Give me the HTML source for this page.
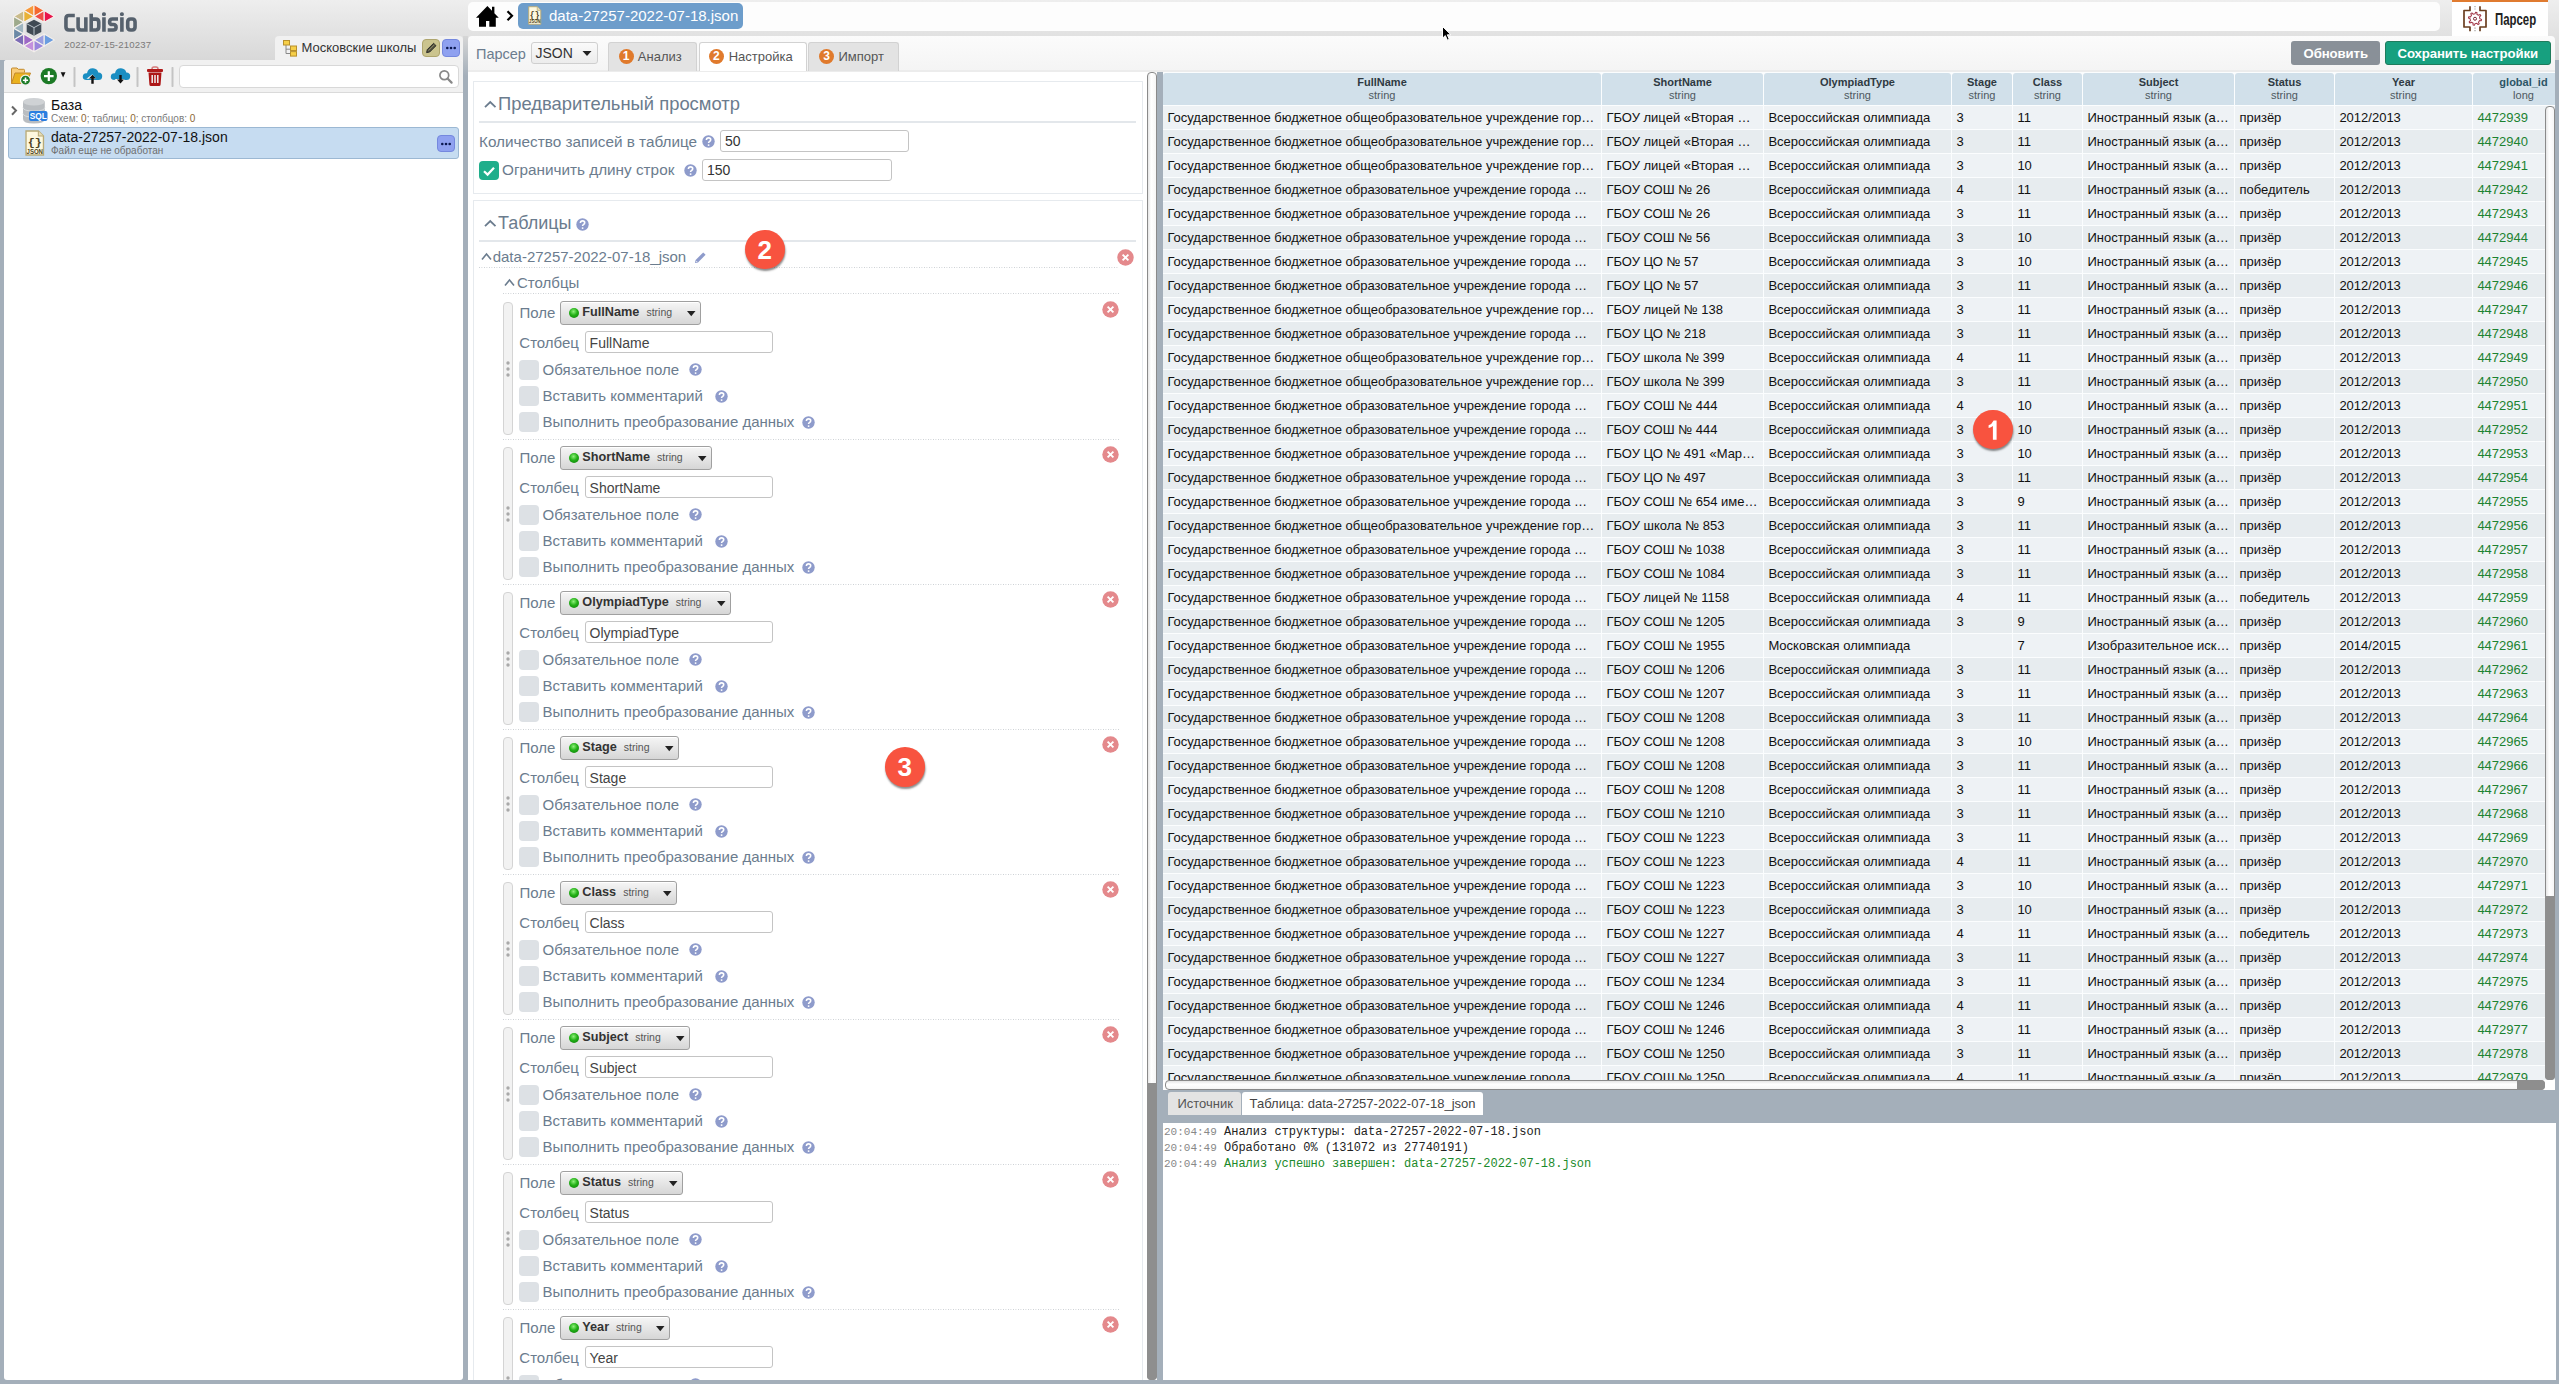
<!DOCTYPE html><html><head><meta charset="utf-8"><title>Cubisio</title><style>
*{box-sizing:border-box;margin:0;padding:0}
html,body{width:2559px;height:1384px;overflow:hidden}
body{position:relative;background:#a4afba;font-family:"Liberation Sans",sans-serif;color:#222}
.a{position:absolute}
.t{line-height:1;white-space:nowrap}
svg{position:absolute;overflow:visible}
.topband{left:0;top:0;width:2559px;height:60px;background:linear-gradient(#eeeeee,#d8d8d8)}
.crumb{left:468px;top:1.5px;width:1972px;height:29px;background:#fdfdfd;border-radius:5px}
.pill{left:518px;top:3px;width:225px;height:26px;background:#6d9dcb;border-radius:5px}
.partab{left:2452px;top:0;width:96px;height:37px;background:#fff;border-top:2px solid #e07b30}
.tb{left:468px;top:36px;width:2087px;height:36px;background:linear-gradient(#fbfbfb,#f4f4f4);border-radius:4px 4px 0 0;box-shadow:inset 0 -2px 0 #ececec,inset 0 -1.6px 0 #c4c4c4}
.slate{color:#6b7c8e}
.sel{border:1px solid #cfcfcf;border-radius:3px;background:linear-gradient(#fafafa,#ececec)}
.tab{top:42px;height:29px;background:#e3e3e3;border:1px solid #d2d2d2;border-bottom:none;border-radius:3px 3px 0 0}
.tab.act{background:#fff}
.num{width:15px;height:15px;border-radius:50%;background:#e07a2c;color:#fff;font-size:12px;font-weight:bold;line-height:15px;text-align:center}
.btn{top:41px;height:24px;border-radius:3px}
.lp{left:4px;top:60px;width:459px;height:1320px;background:#fff;border-radius:3px}
.ltb{left:4px;top:60px;width:459px;height:33px;background:#f1f1f1;border-bottom:1px solid #dadada;border-radius:3px 3px 0 0}
.mid{left:468px;top:72px;width:689px;height:1308px;background:#fff}
.vsb{width:10px;border:1px solid #8a8a8a;border-radius:4px;background:linear-gradient(90deg,#e6e6e6,#fff 40%,#f6f6f6)}
.thumb{background:#8e8e8e;border-radius:0 0 4px 4px}
.right{left:1163px;top:72px;width:1392px;height:1008px;background:#fbfdfe;overflow:hidden}
.hdr{top:1px;height:32px;background:#d1e0ea;border-radius:3px 3px 0 0;text-align:center;font-size:11px;line-height:13px;padding-top:3px;color:#4e5860}
.hdr b{display:block;color:#2f3a42}
.row{left:0;width:1392px;height:24px}
.c{position:absolute;top:0;height:23px;line-height:23px;font-size:13px;color:#111;white-space:nowrap;overflow:hidden;padding-left:4.4px}
.logbar{left:1163px;top:1090px;width:1393px;height:33px;background:#a4afba}
.log{left:1163px;top:1123px;width:1393px;height:257px;background:#fff;font-family:"Liberation Mono",monospace;font-size:12px;color:#222}
.ln{position:absolute;left:1px;height:16px;line-height:16px;white-space:pre}
.ln i{font-style:normal;font-size:11px;color:#888}
.sec{border:1px solid #e6eaee;background:#fff}
.inp{border:1px solid #c4c4c4;border-radius:3px;background:#fff}
.cb{width:20px;height:20px;border-radius:4px;background:#dde1e5}
.dot{height:1px;background-image:linear-gradient(90deg,#c9cdd1 50%,transparent 50%);background-size:2.5px 1px}
.fsel{height:24px;border:1px solid #a0a0a0;border-radius:3px;background:linear-gradient(#f6f6f6,#d6d6d6);box-shadow:inset 0 1px 0 #fff}
.gd{width:10px;height:10px;border-radius:50%;background:radial-gradient(circle at 45% 35%,#8ef07a,#22b016 45%,#0c7a0a 100%)}
.handle{width:10px;border:1px solid #d4d4d4;border-radius:4px;background:#f2f2f2}
.badge{width:39.5px;height:39.5px;border-radius:50%;background:#f8533f;color:#fff;font-size:26px;font-weight:bold;line-height:40px;text-align:center;box-shadow:0.5px 2px 2px rgba(0,0,0,.45)}
</style></head><body><div class="a topband"></div><div class="a" style="left:463px;top:36px;width:5px;height:40px;background:linear-gradient(#d6d6d6,#a4afba)"></div><svg class="a" style="left:0;top:0" width="60" height="60"><polygon points="23.78,10.50 23.78,22.30 13.56,16.40" fill="#c9bb8b" stroke="#f4f0ec" stroke-width="1.1" stroke-linejoin="round"/><polygon points="13.56,16.40 13.56,28.20 23.78,22.30" fill="#9eaa8c" stroke="#f4f0ec" stroke-width="1.1" stroke-linejoin="round"/><polygon points="23.78,22.30 23.78,34.10 13.56,28.20" fill="#9fb5c0" stroke="#f4f0ec" stroke-width="1.1" stroke-linejoin="round"/><polygon points="13.56,28.20 13.56,40.00 23.78,34.10" fill="#6b89a6" stroke="#f4f0ec" stroke-width="1.1" stroke-linejoin="round"/><polygon points="23.78,34.10 23.78,45.90 13.56,40.00" fill="#7c6cb6" stroke="#f4f0ec" stroke-width="1.1" stroke-linejoin="round"/><polygon points="34.00,4.60 34.00,16.40 23.78,10.50" fill="#f7993a" stroke="#f4f0ec" stroke-width="1.1" stroke-linejoin="round"/><polygon points="23.78,10.50 23.78,22.30 34.00,16.40" fill="#e8b236" stroke="#f4f0ec" stroke-width="1.1" stroke-linejoin="round"/><polygon points="23.78,34.10 23.78,45.90 34.00,40.00" fill="#9d68c6" stroke="#f4f0ec" stroke-width="1.1" stroke-linejoin="round"/><polygon points="34.00,40.00 34.00,51.80 23.78,45.90" fill="#c390dd" stroke="#f4f0ec" stroke-width="1.1" stroke-linejoin="round"/><polygon points="34.00,4.60 34.00,16.40 44.22,10.50" fill="#f5692e" stroke="#f4f0ec" stroke-width="1.1" stroke-linejoin="round"/><polygon points="44.22,10.50 44.22,22.30 34.00,16.40" fill="#ef4c45" stroke="#f4f0ec" stroke-width="1.1" stroke-linejoin="round"/><polygon points="44.22,34.10 44.22,45.90 34.00,40.00" fill="#9a9ee0" stroke="#f4f0ec" stroke-width="1.1" stroke-linejoin="round"/><polygon points="34.00,40.00 34.00,51.80 44.22,45.90" fill="#9b86dc" stroke="#f4f0ec" stroke-width="1.1" stroke-linejoin="round"/><polygon points="44.22,10.50 44.22,22.30 54.44,16.40" fill="#e9144b" stroke="#f4f0ec" stroke-width="1.1" stroke-linejoin="round"/><polygon points="44.22,34.10 44.22,45.90 54.44,40.00" fill="#6a9de0" stroke="#f4f0ec" stroke-width="1.1" stroke-linejoin="round"/><polygon points="34,19.8 41.3,23.6 41.3,32 34,35.8 26.7,32 26.7,23.6" fill="#3f4a54"/><path d="M26.9,23.8 L34,27.6 L41.1,23.8 M34,27.6 L34,35.6" stroke="#b9c2ca" stroke-width="1" fill="none"/></svg><svg style="left:0;top:0" width="150" height="40"><g fill="none" stroke="#56616d" stroke-width="3.6"><path d="M74.8,15.5 H68.9 Q65.95,15.5 65.95,18.4 V27.1 Q65.95,30 68.9,30 H74.8"/><path d="M78.1,17.2 V27.1 Q78.1,30 81,30 H85.85 M85.85,17.2 V31.75"/><path d="M91.2,13.8 V31.75 M91.2,19.1 H95.85 Q98.75,19.1 98.75,22 V27.1 Q98.75,30 95.85,30 H91.2"/><path d="M103.95,17.2 V31.75 M121.9,17.2 V31.75"/><path d="M118,19 H112.5 Q109.6,19 109.6,21.9 Q109.6,24.55 112.5,24.55 H113.2 Q116.1,24.55 116.1,27.3 Q116.1,30 113.2,30 H107.7"/><path d="M130.6,19.05 H132.15 Q135.05,19.05 135.05,21.95 V27.1 Q135.05,30 132.15,30 H130.6 Q127.7,30 127.7,27.1 V21.95 Q127.7,19.05 130.6,19.05 Z"/></g><rect x="102" y="12.2" width="3.9" height="3.8" rx="1.6" fill="#56616d"/><rect x="119.95" y="12.2" width="3.9" height="3.8" rx="1.6" fill="#56616d"/></svg><div class="a t " style="left:64.3px;top:39.87px;font-size:9.6px;color:#7a7a7a;letter-spacing:0.15px">2022-07-15-210237</div><div class="a" style="left:275px;top:36px;width:188px;height:26px;background:#f1f1f1;border-radius:4px 4px 0 0"></div><svg style="left:282px;top:39px" width="18" height="19"><path d="M4,5 V14.5 H9 M4,10.2 H9" stroke="#888" stroke-width="1" fill="none"/><rect x="1.5" y="1.5" width="6" height="4.5" fill="#f6cf48" stroke="#b8902c"/><rect x="8.5" y="7" width="6" height="4.5" fill="#f6cf48" stroke="#b8902c"/><rect x="8.5" y="12.6" width="6" height="4.5" fill="#f6cf48" stroke="#b8902c"/></svg><div class="a t " style="left:301.5px;top:41.00px;font-size:13px;color:#333">Московские школы</div><div class="a" style="left:422px;top:39px;width:17.5px;height:17.5px;background:#cbc48e;border:1px solid #aea56e;border-radius:4px"></div><svg style="left:424px;top:41px" width="14" height="14"><path d="M2.6,11.6 L3.3,8.6 L9.6,2.3 L12,4.7 L5.7,11 Z" fill="#55543f" stroke="#222" stroke-width="0.9"/><path d="M4.4,9.6 L10.4,3.6" stroke="#a8a17a" stroke-width="0.6"/></svg><div class="a" style="left:442px;top:39px;width:18px;height:17.5px;background:#8fa1f0;border:1px solid #7588de;border-radius:4px"></div><svg style="left:442px;top:39px" width="18" height="18"><circle cx="5.3" cy="9" r="1.3" fill="#0b1850"/><circle cx="9" cy="9" r="1.3" fill="#0b1850"/><circle cx="12.7" cy="9" r="1.3" fill="#0b1850"/></svg><div class="a lp"></div><div class="a ltb"></div><svg style="left:10px;top:66px" width="24" height="20"><path d="M1.5,17.5 V3 Q1.5,2 2.5,2 H7 L8.3,3.3 H13.5 Q14.5,3.3 14.5,4.3 V6.5" fill="#f9cd7a" stroke="#c38a2c" stroke-width="1"/><path d="M1.5,17.5 L5,7 H20.5 L16.5,17.5 Z" fill="#eab21e" stroke="#c38a2c" stroke-width="1" stroke-linejoin="round"/><circle cx="15.5" cy="14.2" r="5" fill="#1c7a26" stroke="#f1f1f1" stroke-width="1.2"/><path d="M15.5,11.6 V16.8 M12.9,14.2 H18.1" stroke="#fff" stroke-width="1.6"/></svg><svg style="left:39px;top:66px" width="30" height="20"><circle cx="9.8" cy="10.1" r="8.2" fill="#1c7a26"/><path d="M9.8,5.3 V14.9 M5,10.1 H14.6" stroke="#fff" stroke-width="2.2"/><path d="M21.7,6.3 H26.5 L24.1,11.4 Z" fill="#111"/></svg><div class="a" style="left:73.0px;top:67px;width:3px;height:20px;background:linear-gradient(90deg,#e6e6e6,#c4c4c4,#e6e6e6);border-radius:1px"></div><div class="a" style="left:136.0px;top:67px;width:3px;height:20px;background:linear-gradient(90deg,#e6e6e6,#c4c4c4,#e6e6e6);border-radius:1px"></div><div class="a" style="left:171.0px;top:67px;width:3px;height:20px;background:linear-gradient(90deg,#e6e6e6,#c4c4c4,#e6e6e6);border-radius:1px"></div><svg style="left:82px;top:67px" width="22" height="18"><path d="M4.5,13 Q0.5,13 0.8,9.2 Q1.2,5.8 5,6.2 Q6,1 11,1.2 Q15.5,1.5 16.3,5.5 Q20.5,5.8 20.2,9.5 Q20,13 16.5,13 Z" fill="#1a8ec2"/><path d="M10.3,7.2 L14.2,11.8 H4.4 Z" fill="#f1f1f1"/><path d="M10.5,7.8 L14,11.6 H11.7 V16.8 H9.3 V11.6 H7 Z" fill="#111"/></svg><svg style="left:110px;top:67px" width="22" height="18"><path d="M4.5,13 Q0.5,13 0.8,9.2 Q1.2,5.8 5,6.2 Q6,1 11,1.2 Q15.5,1.5 16.3,5.5 Q20.5,5.8 20.2,9.5 Q20,13 16.5,13 Z" fill="#1a8ec2"/><path d="M4.4,12.4 H14.6 L10.5,17.3 Z" fill="#f1f1f1" transform="translate(0,-0.4)"/><path d="M9.3,8 H11.7 V12.4 H14 L10.5,16.6 L7,12.4 H9.3 Z" fill="#111"/></svg><svg style="left:146px;top:66px" width="18" height="21"><path d="M6,3 Q6,1 8,1 H10 Q12,1 12,3" fill="none" stroke="#d77a7a" stroke-width="1.5"/><rect x="1" y="3" width="16" height="3" rx="1" fill="#b01a1a"/><path d="M2.5,6.5 H15.5 L14.6,18.5 Q14.5,20 13,20 H5 Q3.5,20 3.4,18.5 Z" fill="#ad1717"/><path d="M6.2,9 V17 M9,9 V17 M11.8,9 V17" stroke="#f1f1f1" stroke-width="1.5"/></svg><div class="a" style="left:178.5px;top:65px;width:280px;height:23px;background:#fff;border:1px solid #d8d8d8;border-radius:4px"></div><svg style="left:438px;top:69px" width="16" height="16"><circle cx="6.3" cy="6.3" r="4.4" fill="none" stroke="#888" stroke-width="1.7"/><path d="M9.5,9.5 L13.6,13.6" stroke="#888" stroke-width="2.2" stroke-linecap="round"/></svg><svg style="left:9px;top:104px" width="10" height="14"><path d="M3,2.5 L7,6.6 L3,10.7" fill="none" stroke="#666" stroke-width="2"/></svg><svg style="left:22px;top:97px" width="28" height="28"><path d="M1,4.5 V22 Q1,26.5 11.9,26.5 Q22.8,26.5 22.8,22 V4.5 Z" fill="#b9bdc1"/><path d="M1,10.5 Q1,14 11.9,14 Q22.8,14 22.8,10.5 M1,16.5 Q1,20 11.9,20 Q22.8,20 22.8,16.5" fill="none" stroke="#d7dadd" stroke-width="1"/><ellipse cx="11.9" cy="4.8" rx="10.9" ry="3.8" fill="#cfd2d5"/><rect x="7" y="14" width="18.5" height="10" rx="2" fill="#2a7ee0"/><text x="16.2" y="22.2" font-family="Liberation Sans" font-weight="bold" font-size="8.3" fill="#fff" text-anchor="middle">SQL</text></svg><div class="a t " style="left:51px;top:97.95px;font-size:14px;color:#111">База</div><div class="a t " style="left:51px;top:113.53px;font-size:10px;color:#7b7b7b">Схем: <span style="color:#8b6734">0</span>; таблиц: <span style="color:#8b6734">0</span>; столбцов: <span style="color:#8b6734">0</span></div><div class="a" style="left:8px;top:126.5px;width:451px;height:32.5px;background:#c6dcf1;border:1px solid #9cb8d3;border-radius:3px"></div><svg style="left:24.5px;top:130px" width="19.5" height="26" viewBox="0 0 19 26" preserveAspectRatio="none"><path d="M1,1 H13 L18,6 V25 H1 Z" fill="#fdf8df" stroke="#b9aa77" stroke-width="1.3"/><path d="M13,1 V6 H18" fill="#e6ddb8" stroke="#b9aa77" stroke-width="1"/><text x="9.5" y="16" font-family="Liberation Mono" font-weight="bold" font-size="11.5" fill="#4d4322" text-anchor="middle">{}</text><text x="9.5" y="23.6" font-family="Liberation Sans" font-weight="bold" font-size="6.8" fill="#4d4322" text-anchor="middle" textLength="16" lengthAdjust="spacingAndGlyphs">JSON</text></svg><div class="a t " style="left:51px;top:129.55px;font-size:14px;color:#111">data-27257-2022-07-18.json</div><div class="a t " style="left:51px;top:146.13px;font-size:10px;color:#6e6e6e">Файл еще не обработан</div><div class="a" style="left:437px;top:134.5px;width:18px;height:17.5px;background:#8fa1f0;border:1px solid #7588de;border-radius:4px"></div><svg style="left:437px;top:134.5px" width="18" height="18"><circle cx="5.3" cy="9" r="1.3" fill="#0b1850"/><circle cx="9" cy="9" r="1.3" fill="#0b1850"/><circle cx="12.7" cy="9" r="1.3" fill="#0b1850"/></svg><div class="a crumb"></div><svg style="left:475px;top:5px" width="26" height="23"><path d="M1,12.7 L12.4,1 L17,5.8 V1.8 H19.4 V8.3 L23.75,12.7 H20.8 V21.8 H14.3 V16 H11 V21.8 H4 V12.7 Z" fill="#000"/></svg><svg style="left:505px;top:9px" width="10" height="14"><path d="M2.5,2.3 L7,6.8 L2.5,11.3" fill="none" stroke="#000" stroke-width="2.2"/></svg><div class="a pill"></div><svg style="left:528px;top:6px" width="13.5" height="19" viewBox="0 0 19 26" preserveAspectRatio="none"><path d="M1,1 H13 L18,6 V25 H1 Z" fill="#fdf8df" stroke="#b9aa77" stroke-width="1.3"/><path d="M13,1 V6 H18" fill="#e6ddb8" stroke="#b9aa77" stroke-width="1"/><text x="9.5" y="16" font-family="Liberation Mono" font-weight="bold" font-size="11.5" fill="#4d4322" text-anchor="middle">{}</text><text x="9.5" y="23.6" font-family="Liberation Sans" font-weight="bold" font-size="6.8" fill="#4d4322" text-anchor="middle" textLength="16" lengthAdjust="spacingAndGlyphs">JSON</text></svg><div class="a t " style="left:549px;top:7.80px;font-size:15px;color:#fff">data-27257-2022-07-18.json</div><div class="a partab"></div><svg style="left:2460px;top:5px" width="30" height="28"><path d="M10,1.2 V5.5 H4 V22 H10 V26.3 M20,1.2 V5.5 H26 V22 H20 V26.3" fill="none" stroke="#6a3f20" stroke-width="1.7" stroke-linejoin="round"/><path d="M15,1 V4.5 M15,22.5 V26.5" stroke="#999" stroke-width="1.1" stroke-dasharray="1.3,1.2"/><path d="M19.90,13.75 L21.57,14.37 L21.31,15.69 L19.53,15.63 L18.46,17.21 L19.21,18.84 L18.09,19.58 L16.88,18.28 L15.00,18.65 L14.38,20.32 L13.06,20.06 L13.12,18.28 L11.54,17.21 L9.91,17.96 L9.17,16.84 L10.47,15.63 L10.10,13.75 L8.43,13.13 L8.69,11.81 L10.47,11.87 L11.54,10.29 L10.79,8.66 L11.91,7.92 L13.12,9.22 L15.00,8.85 L15.62,7.18 L16.94,7.44 L16.88,9.22 L18.46,10.29 L20.09,9.54 L20.83,10.66 L19.53,11.87 Z" fill="none" stroke="#a33a4a" stroke-width="1.05" stroke-linejoin="round"/><circle cx="15" cy="13.75" r="1.5" fill="none" stroke="#7a2a35" stroke-width="1"/></svg><div class="a t " style="left:2494.8px;top:11.98px;font-size:16.8px;color:#222;font-weight:bold;transform:scaleX(0.68);transform-origin:left top">Парсер</div><div class="a tb"></div><div class="a t slate" style="left:476px;top:46.73px;font-size:14.5px;">Парсер</div><div class="a sel" style="left:531px;top:42px;width:67px;height:22px"></div><div class="a t " style="left:535.5px;top:45.75px;font-size:14px;color:#333">JSON</div><svg style="left:582px;top:50px" width="10" height="8"><path d="M0.5,1 H9.5 L5,6 Z" fill="#222"/></svg><div class="a tab" style="left:608px;width:89px"></div><div class="a num" style="left:618.5px;top:49.2px">1</div><div class="a t " style="left:637.8px;top:50.00px;font-size:13px;color:#555">Анализ</div><div class="a tab act" style="left:699px;width:108px"></div><div class="a num" style="left:708.9px;top:49.2px">2</div><div class="a t " style="left:728.7px;top:50.00px;font-size:13px;color:#555">Настройка</div><div class="a tab" style="left:808px;width:91px"></div><div class="a num" style="left:819.2px;top:49.2px">3</div><div class="a t " style="left:838.5px;top:50.00px;font-size:13px;color:#555">Импорт</div><div class="a btn" style="left:2291px;width:89px;background:#899098"></div><div class="a t " style="left:2303.5px;top:46.83px;font-size:13.2px;color:#fff;font-weight:bold;letter-spacing:-0.1px">Обновить</div><div class="a btn" style="left:2385px;width:166px;background:#17a07f;border:1px solid #1f7c5c"></div><div class="a t " style="left:2397.5px;top:46.83px;font-size:13.2px;color:#fff;font-weight:bold;letter-spacing:-0.1px">Сохранить настройки</div><div class="a mid"></div><div class="a vsb" style="left:1147px;top:72px;height:1308px"></div><div class="a thumb" style="left:1147px;top:1083px;width:10px;height:297px"></div><div class="a sec" style="left:472.5px;top:81px;width:670px;height:113px"></div><svg style="left:483.6px;top:100px" width="12.5" height="9.1"><path d="M1,7.1 L6.25,2 L11.5,7.1" fill="none" stroke="#6b7c8e" stroke-width="1.8"/></svg><div class="a t slate" style="left:498px;top:94.62px;font-size:18.4px;">Предварительный просмотр</div><div class="a" style="left:479px;top:121px;width:657px;height:2px;background:#e3e7eb"></div><div class="a t slate" style="left:479px;top:133.55px;font-size:15.3px;">Количество записей в таблице</div><svg style="left:701.5px;top:134.5px" width="13" height="13"><circle cx="6.5" cy="6.5" r="6.2" fill="#8e9bcb"/><path d="M4.4,5.1 Q4.4,2.9 6.6,2.9 Q8.7,2.9 8.7,4.8 Q8.7,5.9 7.4,6.6 Q6.6,7 6.6,8.1" fill="none" stroke="#fff" stroke-width="1.6"/><circle cx="6.6" cy="10.1" r="0.95" fill="#fff"/></svg><div class="a inp" style="left:720px;top:129.7px;width:189px;height:22px"></div><div class="a t " style="left:725px;top:134.15px;font-size:14px;color:#333">50</div><div class="a" style="left:479px;top:160.7px;width:20px;height:19.5px;background:#1fae8b;border-radius:4px"></div><svg style="left:479px;top:160.7px" width="20" height="20"><path d="M5,10.2 L8.6,13.6 L15,6.8" fill="none" stroke="#fff" stroke-width="2.2"/></svg><div class="a t slate" style="left:502px;top:162.05px;font-size:15.3px;">Ограничить длину строк</div><svg style="left:683.5px;top:163.5px" width="13" height="13"><circle cx="6.5" cy="6.5" r="6.2" fill="#8e9bcb"/><path d="M4.4,5.1 Q4.4,2.9 6.6,2.9 Q8.7,2.9 8.7,4.8 Q8.7,5.9 7.4,6.6 Q6.6,7 6.6,8.1" fill="none" stroke="#fff" stroke-width="1.6"/><circle cx="6.6" cy="10.1" r="0.95" fill="#fff"/></svg><div class="a inp" style="left:702px;top:158.8px;width:190px;height:22px"></div><div class="a t " style="left:707px;top:163.15px;font-size:14px;color:#333">150</div><div class="a sec" style="left:472.5px;top:200px;width:670px;height:1190px"></div><svg style="left:483.6px;top:219.3px" width="12.5" height="9.1"><path d="M1,7.1 L6.25,2 L11.5,7.1" fill="none" stroke="#6b7c8e" stroke-width="1.8"/></svg><div class="a t slate" style="left:498px;top:214.16px;font-size:18px;">Таблицы</div><svg style="left:576.1px;top:217.5px" width="13" height="13"><circle cx="6.5" cy="6.5" r="6.2" fill="#8e9bcb"/><path d="M4.4,5.1 Q4.4,2.9 6.6,2.9 Q8.7,2.9 8.7,4.8 Q8.7,5.9 7.4,6.6 Q6.6,7 6.6,8.1" fill="none" stroke="#fff" stroke-width="1.6"/><circle cx="6.6" cy="10.1" r="0.95" fill="#fff"/></svg><div class="a" style="left:479px;top:240px;width:657px;height:2px;background:#e3e7eb"></div><svg style="left:480.5px;top:251.5px" width="11" height="9.5"><path d="M1,7.5 L5.5,2 L10,7.5" fill="none" stroke="#6b7c8e" stroke-width="1.6"/></svg><div class="a t slate" style="left:492.7px;top:248.70px;font-size:15px;">data-27257-2022-07-18_json</div><svg style="left:693px;top:250px" width="15" height="15"><path d="M2,13 L2.6,10 L10.2,2.4 L12.6,4.8 L5,12.4 Z" fill="#8e9bcb"/><path d="M3.2,12 L4.2,11" stroke="#fff" stroke-width="0.8"/></svg><svg style="left:1117.0px;top:249.39999999999998px" width="17" height="17"><circle cx="8.5" cy="8.5" r="8.2" fill="#e4898c"/><path d="M5.6,5.6 L11.4,11.4 M11.4,5.6 L5.6,11.4" stroke="#fff" stroke-width="1.9"/></svg><div class="a dot" style="left:479px;top:267px;width:640px"></div><svg style="left:504px;top:277.5px" width="11" height="9.5"><path d="M1,7.5 L5.5,2 L10,7.5" fill="none" stroke="#6b7c8e" stroke-width="1.6"/></svg><div class="a t slate" style="left:517px;top:275.00px;font-size:15px;">Столбцы</div><div class="a dot" style="left:503px;top:293px;width:616px"></div><div class="a handle" style="left:503px;top:302.4px;height:133px"></div><svg style="left:505px;top:360px" width="6" height="18"><circle cx="3" cy="3" r="1.7" fill="#a9a9a9"/><circle cx="3" cy="9" r="1.7" fill="#a9a9a9"/><circle cx="3" cy="15" r="1.7" fill="#a9a9a9"/></svg><div class="a t slate" style="left:519.4px;top:305.00px;font-size:15px;">Поле</div><div class="a fsel" style="left:560.4px;top:300.5px;width:141.10000000000002px"></div><div class="a gd" style="left:568.7px;top:307.9px"></div><div class="a t " style="left:582.3px;top:305.95px;font-size:12.7px;color:#333"><b>FullName</b><span style="font-size:10.5px;margin-left:7px;color:#555">string</span></div><svg style="left:687.2px;top:310.5px" width="9" height="6"><path d="M0,0 H8.5 L4.25,5.3 Z" fill="#222"/></svg><svg style="left:1101.5px;top:301.3px" width="17" height="17"><circle cx="8.5" cy="8.5" r="8.2" fill="#e4898c"/><path d="M5.6,5.6 L11.4,11.4 M11.4,5.6 L5.6,11.4" stroke="#fff" stroke-width="1.9"/></svg><div class="a t slate" style="left:519.3px;top:335.30px;font-size:15px;">Столбец</div><div class="a inp" style="left:584.5px;top:331.4px;width:188px;height:22px"></div><div class="a t " style="left:589.6px;top:335.65px;font-size:14px;color:#444">FullName</div><div class="a cb" style="left:519.3px;top:360.0px"></div><div class="a t slate" style="left:542.6px;top:361.90px;font-size:15px;">Обязательное поле</div><svg style="left:688.5px;top:363.0px" width="13" height="13"><circle cx="6.5" cy="6.5" r="6.2" fill="#8e9bcb"/><path d="M4.4,5.1 Q4.4,2.9 6.6,2.9 Q8.7,2.9 8.7,4.8 Q8.7,5.9 7.4,6.6 Q6.6,7 6.6,8.1" fill="none" stroke="#fff" stroke-width="1.6"/><circle cx="6.6" cy="10.1" r="0.95" fill="#fff"/></svg><div class="a cb" style="left:519.3px;top:386.2px"></div><div class="a t slate" style="left:542.6px;top:388.10px;font-size:15px;">Вставить комментарий</div><svg style="left:714.6px;top:389.5px" width="13" height="13"><circle cx="6.5" cy="6.5" r="6.2" fill="#8e9bcb"/><path d="M4.4,5.1 Q4.4,2.9 6.6,2.9 Q8.7,2.9 8.7,4.8 Q8.7,5.9 7.4,6.6 Q6.6,7 6.6,8.1" fill="none" stroke="#fff" stroke-width="1.6"/><circle cx="6.6" cy="10.1" r="0.95" fill="#fff"/></svg><div class="a cb" style="left:519.3px;top:412.4px"></div><div class="a t slate" style="left:542.6px;top:414.30px;font-size:15px;">Выполнить преобразование данных</div><svg style="left:801.7px;top:416.0px" width="13" height="13"><circle cx="6.5" cy="6.5" r="6.2" fill="#8e9bcb"/><path d="M4.4,5.1 Q4.4,2.9 6.6,2.9 Q8.7,2.9 8.7,4.8 Q8.7,5.9 7.4,6.6 Q6.6,7 6.6,8.1" fill="none" stroke="#fff" stroke-width="1.6"/><circle cx="6.6" cy="10.1" r="0.95" fill="#fff"/></svg><div class="a dot" style="left:503px;top:438.5px;width:616px"></div><div class="a handle" style="left:503px;top:447.4px;height:133px"></div><svg style="left:505px;top:505px" width="6" height="18"><circle cx="3" cy="3" r="1.7" fill="#a9a9a9"/><circle cx="3" cy="9" r="1.7" fill="#a9a9a9"/><circle cx="3" cy="15" r="1.7" fill="#a9a9a9"/></svg><div class="a t slate" style="left:519.4px;top:450.00px;font-size:15px;">Поле</div><div class="a fsel" style="left:560.4px;top:445.5px;width:151.60000000000002px"></div><div class="a gd" style="left:568.7px;top:452.9px"></div><div class="a t " style="left:582.3px;top:450.95px;font-size:12.7px;color:#333"><b>ShortName</b><span style="font-size:10.5px;margin-left:7px;color:#555">string</span></div><svg style="left:697.7px;top:455.5px" width="9" height="6"><path d="M0,0 H8.5 L4.25,5.3 Z" fill="#222"/></svg><svg style="left:1101.5px;top:446.3px" width="17" height="17"><circle cx="8.5" cy="8.5" r="8.2" fill="#e4898c"/><path d="M5.6,5.6 L11.4,11.4 M11.4,5.6 L5.6,11.4" stroke="#fff" stroke-width="1.9"/></svg><div class="a t slate" style="left:519.3px;top:480.30px;font-size:15px;">Столбец</div><div class="a inp" style="left:584.5px;top:476.4px;width:188px;height:22px"></div><div class="a t " style="left:589.6px;top:480.65px;font-size:14px;color:#444">ShortName</div><div class="a cb" style="left:519.3px;top:505.0px"></div><div class="a t slate" style="left:542.6px;top:506.90px;font-size:15px;">Обязательное поле</div><svg style="left:688.5px;top:508.0px" width="13" height="13"><circle cx="6.5" cy="6.5" r="6.2" fill="#8e9bcb"/><path d="M4.4,5.1 Q4.4,2.9 6.6,2.9 Q8.7,2.9 8.7,4.8 Q8.7,5.9 7.4,6.6 Q6.6,7 6.6,8.1" fill="none" stroke="#fff" stroke-width="1.6"/><circle cx="6.6" cy="10.1" r="0.95" fill="#fff"/></svg><div class="a cb" style="left:519.3px;top:531.2px"></div><div class="a t slate" style="left:542.6px;top:533.10px;font-size:15px;">Вставить комментарий</div><svg style="left:714.6px;top:534.5px" width="13" height="13"><circle cx="6.5" cy="6.5" r="6.2" fill="#8e9bcb"/><path d="M4.4,5.1 Q4.4,2.9 6.6,2.9 Q8.7,2.9 8.7,4.8 Q8.7,5.9 7.4,6.6 Q6.6,7 6.6,8.1" fill="none" stroke="#fff" stroke-width="1.6"/><circle cx="6.6" cy="10.1" r="0.95" fill="#fff"/></svg><div class="a cb" style="left:519.3px;top:557.4px"></div><div class="a t slate" style="left:542.6px;top:559.30px;font-size:15px;">Выполнить преобразование данных</div><svg style="left:801.7px;top:561.0px" width="13" height="13"><circle cx="6.5" cy="6.5" r="6.2" fill="#8e9bcb"/><path d="M4.4,5.1 Q4.4,2.9 6.6,2.9 Q8.7,2.9 8.7,4.8 Q8.7,5.9 7.4,6.6 Q6.6,7 6.6,8.1" fill="none" stroke="#fff" stroke-width="1.6"/><circle cx="6.6" cy="10.1" r="0.95" fill="#fff"/></svg><div class="a dot" style="left:503px;top:583.5px;width:616px"></div><div class="a handle" style="left:503px;top:592.4px;height:133px"></div><svg style="left:505px;top:650px" width="6" height="18"><circle cx="3" cy="3" r="1.7" fill="#a9a9a9"/><circle cx="3" cy="9" r="1.7" fill="#a9a9a9"/><circle cx="3" cy="15" r="1.7" fill="#a9a9a9"/></svg><div class="a t slate" style="left:519.4px;top:595.00px;font-size:15px;">Поле</div><div class="a fsel" style="left:560.4px;top:590.5px;width:170.60000000000002px"></div><div class="a gd" style="left:568.7px;top:597.9px"></div><div class="a t " style="left:582.3px;top:595.95px;font-size:12.7px;color:#333"><b>OlympiadType</b><span style="font-size:10.5px;margin-left:7px;color:#555">string</span></div><svg style="left:716.7px;top:600.5px" width="9" height="6"><path d="M0,0 H8.5 L4.25,5.3 Z" fill="#222"/></svg><svg style="left:1101.5px;top:591.3px" width="17" height="17"><circle cx="8.5" cy="8.5" r="8.2" fill="#e4898c"/><path d="M5.6,5.6 L11.4,11.4 M11.4,5.6 L5.6,11.4" stroke="#fff" stroke-width="1.9"/></svg><div class="a t slate" style="left:519.3px;top:625.30px;font-size:15px;">Столбец</div><div class="a inp" style="left:584.5px;top:621.4px;width:188px;height:22px"></div><div class="a t " style="left:589.6px;top:625.65px;font-size:14px;color:#444">OlympiadType</div><div class="a cb" style="left:519.3px;top:650.0px"></div><div class="a t slate" style="left:542.6px;top:651.90px;font-size:15px;">Обязательное поле</div><svg style="left:688.5px;top:653.0px" width="13" height="13"><circle cx="6.5" cy="6.5" r="6.2" fill="#8e9bcb"/><path d="M4.4,5.1 Q4.4,2.9 6.6,2.9 Q8.7,2.9 8.7,4.8 Q8.7,5.9 7.4,6.6 Q6.6,7 6.6,8.1" fill="none" stroke="#fff" stroke-width="1.6"/><circle cx="6.6" cy="10.1" r="0.95" fill="#fff"/></svg><div class="a cb" style="left:519.3px;top:676.2px"></div><div class="a t slate" style="left:542.6px;top:678.10px;font-size:15px;">Вставить комментарий</div><svg style="left:714.6px;top:679.5px" width="13" height="13"><circle cx="6.5" cy="6.5" r="6.2" fill="#8e9bcb"/><path d="M4.4,5.1 Q4.4,2.9 6.6,2.9 Q8.7,2.9 8.7,4.8 Q8.7,5.9 7.4,6.6 Q6.6,7 6.6,8.1" fill="none" stroke="#fff" stroke-width="1.6"/><circle cx="6.6" cy="10.1" r="0.95" fill="#fff"/></svg><div class="a cb" style="left:519.3px;top:702.4px"></div><div class="a t slate" style="left:542.6px;top:704.30px;font-size:15px;">Выполнить преобразование данных</div><svg style="left:801.7px;top:706.0px" width="13" height="13"><circle cx="6.5" cy="6.5" r="6.2" fill="#8e9bcb"/><path d="M4.4,5.1 Q4.4,2.9 6.6,2.9 Q8.7,2.9 8.7,4.8 Q8.7,5.9 7.4,6.6 Q6.6,7 6.6,8.1" fill="none" stroke="#fff" stroke-width="1.6"/><circle cx="6.6" cy="10.1" r="0.95" fill="#fff"/></svg><div class="a dot" style="left:503px;top:728.5px;width:616px"></div><div class="a handle" style="left:503px;top:737.4px;height:133px"></div><svg style="left:505px;top:795px" width="6" height="18"><circle cx="3" cy="3" r="1.7" fill="#a9a9a9"/><circle cx="3" cy="9" r="1.7" fill="#a9a9a9"/><circle cx="3" cy="15" r="1.7" fill="#a9a9a9"/></svg><div class="a t slate" style="left:519.4px;top:740.00px;font-size:15px;">Поле</div><div class="a fsel" style="left:560.4px;top:735.5px;width:118.60000000000002px"></div><div class="a gd" style="left:568.7px;top:742.9px"></div><div class="a t " style="left:582.3px;top:740.95px;font-size:12.7px;color:#333"><b>Stage</b><span style="font-size:10.5px;margin-left:7px;color:#555">string</span></div><svg style="left:664.7px;top:745.5px" width="9" height="6"><path d="M0,0 H8.5 L4.25,5.3 Z" fill="#222"/></svg><svg style="left:1101.5px;top:736.3px" width="17" height="17"><circle cx="8.5" cy="8.5" r="8.2" fill="#e4898c"/><path d="M5.6,5.6 L11.4,11.4 M11.4,5.6 L5.6,11.4" stroke="#fff" stroke-width="1.9"/></svg><div class="a t slate" style="left:519.3px;top:770.30px;font-size:15px;">Столбец</div><div class="a inp" style="left:584.5px;top:766.4px;width:188px;height:22px"></div><div class="a t " style="left:589.6px;top:770.65px;font-size:14px;color:#444">Stage</div><div class="a cb" style="left:519.3px;top:795.0px"></div><div class="a t slate" style="left:542.6px;top:796.90px;font-size:15px;">Обязательное поле</div><svg style="left:688.5px;top:798.0px" width="13" height="13"><circle cx="6.5" cy="6.5" r="6.2" fill="#8e9bcb"/><path d="M4.4,5.1 Q4.4,2.9 6.6,2.9 Q8.7,2.9 8.7,4.8 Q8.7,5.9 7.4,6.6 Q6.6,7 6.6,8.1" fill="none" stroke="#fff" stroke-width="1.6"/><circle cx="6.6" cy="10.1" r="0.95" fill="#fff"/></svg><div class="a cb" style="left:519.3px;top:821.2px"></div><div class="a t slate" style="left:542.6px;top:823.10px;font-size:15px;">Вставить комментарий</div><svg style="left:714.6px;top:824.5px" width="13" height="13"><circle cx="6.5" cy="6.5" r="6.2" fill="#8e9bcb"/><path d="M4.4,5.1 Q4.4,2.9 6.6,2.9 Q8.7,2.9 8.7,4.8 Q8.7,5.9 7.4,6.6 Q6.6,7 6.6,8.1" fill="none" stroke="#fff" stroke-width="1.6"/><circle cx="6.6" cy="10.1" r="0.95" fill="#fff"/></svg><div class="a cb" style="left:519.3px;top:847.4px"></div><div class="a t slate" style="left:542.6px;top:849.30px;font-size:15px;">Выполнить преобразование данных</div><svg style="left:801.7px;top:851.0px" width="13" height="13"><circle cx="6.5" cy="6.5" r="6.2" fill="#8e9bcb"/><path d="M4.4,5.1 Q4.4,2.9 6.6,2.9 Q8.7,2.9 8.7,4.8 Q8.7,5.9 7.4,6.6 Q6.6,7 6.6,8.1" fill="none" stroke="#fff" stroke-width="1.6"/><circle cx="6.6" cy="10.1" r="0.95" fill="#fff"/></svg><div class="a dot" style="left:503px;top:873.5px;width:616px"></div><div class="a handle" style="left:503px;top:882.4px;height:133px"></div><svg style="left:505px;top:940px" width="6" height="18"><circle cx="3" cy="3" r="1.7" fill="#a9a9a9"/><circle cx="3" cy="9" r="1.7" fill="#a9a9a9"/><circle cx="3" cy="15" r="1.7" fill="#a9a9a9"/></svg><div class="a t slate" style="left:519.4px;top:885.00px;font-size:15px;">Поле</div><div class="a fsel" style="left:560.4px;top:880.5px;width:117.10000000000002px"></div><div class="a gd" style="left:568.7px;top:887.9px"></div><div class="a t " style="left:582.3px;top:885.95px;font-size:12.7px;color:#333"><b>Class</b><span style="font-size:10.5px;margin-left:7px;color:#555">string</span></div><svg style="left:663.2px;top:890.5px" width="9" height="6"><path d="M0,0 H8.5 L4.25,5.3 Z" fill="#222"/></svg><svg style="left:1101.5px;top:881.3px" width="17" height="17"><circle cx="8.5" cy="8.5" r="8.2" fill="#e4898c"/><path d="M5.6,5.6 L11.4,11.4 M11.4,5.6 L5.6,11.4" stroke="#fff" stroke-width="1.9"/></svg><div class="a t slate" style="left:519.3px;top:915.30px;font-size:15px;">Столбец</div><div class="a inp" style="left:584.5px;top:911.4px;width:188px;height:22px"></div><div class="a t " style="left:589.6px;top:915.65px;font-size:14px;color:#444">Class</div><div class="a cb" style="left:519.3px;top:940.0px"></div><div class="a t slate" style="left:542.6px;top:941.90px;font-size:15px;">Обязательное поле</div><svg style="left:688.5px;top:943.0px" width="13" height="13"><circle cx="6.5" cy="6.5" r="6.2" fill="#8e9bcb"/><path d="M4.4,5.1 Q4.4,2.9 6.6,2.9 Q8.7,2.9 8.7,4.8 Q8.7,5.9 7.4,6.6 Q6.6,7 6.6,8.1" fill="none" stroke="#fff" stroke-width="1.6"/><circle cx="6.6" cy="10.1" r="0.95" fill="#fff"/></svg><div class="a cb" style="left:519.3px;top:966.2px"></div><div class="a t slate" style="left:542.6px;top:968.10px;font-size:15px;">Вставить комментарий</div><svg style="left:714.6px;top:969.5px" width="13" height="13"><circle cx="6.5" cy="6.5" r="6.2" fill="#8e9bcb"/><path d="M4.4,5.1 Q4.4,2.9 6.6,2.9 Q8.7,2.9 8.7,4.8 Q8.7,5.9 7.4,6.6 Q6.6,7 6.6,8.1" fill="none" stroke="#fff" stroke-width="1.6"/><circle cx="6.6" cy="10.1" r="0.95" fill="#fff"/></svg><div class="a cb" style="left:519.3px;top:992.4px"></div><div class="a t slate" style="left:542.6px;top:994.30px;font-size:15px;">Выполнить преобразование данных</div><svg style="left:801.7px;top:996.0px" width="13" height="13"><circle cx="6.5" cy="6.5" r="6.2" fill="#8e9bcb"/><path d="M4.4,5.1 Q4.4,2.9 6.6,2.9 Q8.7,2.9 8.7,4.8 Q8.7,5.9 7.4,6.6 Q6.6,7 6.6,8.1" fill="none" stroke="#fff" stroke-width="1.6"/><circle cx="6.6" cy="10.1" r="0.95" fill="#fff"/></svg><div class="a dot" style="left:503px;top:1018.5px;width:616px"></div><div class="a handle" style="left:503px;top:1027.4px;height:133px"></div><svg style="left:505px;top:1085px" width="6" height="18"><circle cx="3" cy="3" r="1.7" fill="#a9a9a9"/><circle cx="3" cy="9" r="1.7" fill="#a9a9a9"/><circle cx="3" cy="15" r="1.7" fill="#a9a9a9"/></svg><div class="a t slate" style="left:519.4px;top:1030.00px;font-size:15px;">Поле</div><div class="a fsel" style="left:560.4px;top:1025.5px;width:129.60000000000002px"></div><div class="a gd" style="left:568.7px;top:1032.9px"></div><div class="a t " style="left:582.3px;top:1030.95px;font-size:12.7px;color:#333"><b>Subject</b><span style="font-size:10.5px;margin-left:7px;color:#555">string</span></div><svg style="left:675.7px;top:1035.5px" width="9" height="6"><path d="M0,0 H8.5 L4.25,5.3 Z" fill="#222"/></svg><svg style="left:1101.5px;top:1026.3px" width="17" height="17"><circle cx="8.5" cy="8.5" r="8.2" fill="#e4898c"/><path d="M5.6,5.6 L11.4,11.4 M11.4,5.6 L5.6,11.4" stroke="#fff" stroke-width="1.9"/></svg><div class="a t slate" style="left:519.3px;top:1060.30px;font-size:15px;">Столбец</div><div class="a inp" style="left:584.5px;top:1056.4px;width:188px;height:22px"></div><div class="a t " style="left:589.6px;top:1060.65px;font-size:14px;color:#444">Subject</div><div class="a cb" style="left:519.3px;top:1085.0px"></div><div class="a t slate" style="left:542.6px;top:1086.90px;font-size:15px;">Обязательное поле</div><svg style="left:688.5px;top:1088.0px" width="13" height="13"><circle cx="6.5" cy="6.5" r="6.2" fill="#8e9bcb"/><path d="M4.4,5.1 Q4.4,2.9 6.6,2.9 Q8.7,2.9 8.7,4.8 Q8.7,5.9 7.4,6.6 Q6.6,7 6.6,8.1" fill="none" stroke="#fff" stroke-width="1.6"/><circle cx="6.6" cy="10.1" r="0.95" fill="#fff"/></svg><div class="a cb" style="left:519.3px;top:1111.2px"></div><div class="a t slate" style="left:542.6px;top:1113.10px;font-size:15px;">Вставить комментарий</div><svg style="left:714.6px;top:1114.5px" width="13" height="13"><circle cx="6.5" cy="6.5" r="6.2" fill="#8e9bcb"/><path d="M4.4,5.1 Q4.4,2.9 6.6,2.9 Q8.7,2.9 8.7,4.8 Q8.7,5.9 7.4,6.6 Q6.6,7 6.6,8.1" fill="none" stroke="#fff" stroke-width="1.6"/><circle cx="6.6" cy="10.1" r="0.95" fill="#fff"/></svg><div class="a cb" style="left:519.3px;top:1137.4px"></div><div class="a t slate" style="left:542.6px;top:1139.30px;font-size:15px;">Выполнить преобразование данных</div><svg style="left:801.7px;top:1141.0px" width="13" height="13"><circle cx="6.5" cy="6.5" r="6.2" fill="#8e9bcb"/><path d="M4.4,5.1 Q4.4,2.9 6.6,2.9 Q8.7,2.9 8.7,4.8 Q8.7,5.9 7.4,6.6 Q6.6,7 6.6,8.1" fill="none" stroke="#fff" stroke-width="1.6"/><circle cx="6.6" cy="10.1" r="0.95" fill="#fff"/></svg><div class="a dot" style="left:503px;top:1163.5px;width:616px"></div><div class="a handle" style="left:503px;top:1172.4px;height:133px"></div><svg style="left:505px;top:1230px" width="6" height="18"><circle cx="3" cy="3" r="1.7" fill="#a9a9a9"/><circle cx="3" cy="9" r="1.7" fill="#a9a9a9"/><circle cx="3" cy="15" r="1.7" fill="#a9a9a9"/></svg><div class="a t slate" style="left:519.4px;top:1175.00px;font-size:15px;">Поле</div><div class="a fsel" style="left:560.4px;top:1170.5px;width:122.60000000000002px"></div><div class="a gd" style="left:568.7px;top:1177.9px"></div><div class="a t " style="left:582.3px;top:1175.95px;font-size:12.7px;color:#333"><b>Status</b><span style="font-size:10.5px;margin-left:7px;color:#555">string</span></div><svg style="left:668.7px;top:1180.5px" width="9" height="6"><path d="M0,0 H8.5 L4.25,5.3 Z" fill="#222"/></svg><svg style="left:1101.5px;top:1171.3px" width="17" height="17"><circle cx="8.5" cy="8.5" r="8.2" fill="#e4898c"/><path d="M5.6,5.6 L11.4,11.4 M11.4,5.6 L5.6,11.4" stroke="#fff" stroke-width="1.9"/></svg><div class="a t slate" style="left:519.3px;top:1205.30px;font-size:15px;">Столбец</div><div class="a inp" style="left:584.5px;top:1201.4px;width:188px;height:22px"></div><div class="a t " style="left:589.6px;top:1205.65px;font-size:14px;color:#444">Status</div><div class="a cb" style="left:519.3px;top:1230.0px"></div><div class="a t slate" style="left:542.6px;top:1231.90px;font-size:15px;">Обязательное поле</div><svg style="left:688.5px;top:1233.0px" width="13" height="13"><circle cx="6.5" cy="6.5" r="6.2" fill="#8e9bcb"/><path d="M4.4,5.1 Q4.4,2.9 6.6,2.9 Q8.7,2.9 8.7,4.8 Q8.7,5.9 7.4,6.6 Q6.6,7 6.6,8.1" fill="none" stroke="#fff" stroke-width="1.6"/><circle cx="6.6" cy="10.1" r="0.95" fill="#fff"/></svg><div class="a cb" style="left:519.3px;top:1256.2px"></div><div class="a t slate" style="left:542.6px;top:1258.10px;font-size:15px;">Вставить комментарий</div><svg style="left:714.6px;top:1259.5px" width="13" height="13"><circle cx="6.5" cy="6.5" r="6.2" fill="#8e9bcb"/><path d="M4.4,5.1 Q4.4,2.9 6.6,2.9 Q8.7,2.9 8.7,4.8 Q8.7,5.9 7.4,6.6 Q6.6,7 6.6,8.1" fill="none" stroke="#fff" stroke-width="1.6"/><circle cx="6.6" cy="10.1" r="0.95" fill="#fff"/></svg><div class="a cb" style="left:519.3px;top:1282.4px"></div><div class="a t slate" style="left:542.6px;top:1284.30px;font-size:15px;">Выполнить преобразование данных</div><svg style="left:801.7px;top:1286.0px" width="13" height="13"><circle cx="6.5" cy="6.5" r="6.2" fill="#8e9bcb"/><path d="M4.4,5.1 Q4.4,2.9 6.6,2.9 Q8.7,2.9 8.7,4.8 Q8.7,5.9 7.4,6.6 Q6.6,7 6.6,8.1" fill="none" stroke="#fff" stroke-width="1.6"/><circle cx="6.6" cy="10.1" r="0.95" fill="#fff"/></svg><div class="a dot" style="left:503px;top:1308.5px;width:616px"></div><div class="a handle" style="left:503px;top:1317.4px;height:133px"></div><svg style="left:505px;top:1375px" width="6" height="18"><circle cx="3" cy="3" r="1.7" fill="#a9a9a9"/><circle cx="3" cy="9" r="1.7" fill="#a9a9a9"/><circle cx="3" cy="15" r="1.7" fill="#a9a9a9"/></svg><div class="a t slate" style="left:519.4px;top:1320.00px;font-size:15px;">Поле</div><div class="a fsel" style="left:560.4px;top:1315.5px;width:110.10000000000002px"></div><div class="a gd" style="left:568.7px;top:1322.9px"></div><div class="a t " style="left:582.3px;top:1320.95px;font-size:12.7px;color:#333"><b>Year</b><span style="font-size:10.5px;margin-left:7px;color:#555">string</span></div><svg style="left:656.2px;top:1325.5px" width="9" height="6"><path d="M0,0 H8.5 L4.25,5.3 Z" fill="#222"/></svg><svg style="left:1101.5px;top:1316.3px" width="17" height="17"><circle cx="8.5" cy="8.5" r="8.2" fill="#e4898c"/><path d="M5.6,5.6 L11.4,11.4 M11.4,5.6 L5.6,11.4" stroke="#fff" stroke-width="1.9"/></svg><div class="a t slate" style="left:519.3px;top:1350.30px;font-size:15px;">Столбец</div><div class="a inp" style="left:584.5px;top:1346.4px;width:188px;height:22px"></div><div class="a t " style="left:589.6px;top:1350.65px;font-size:14px;color:#444">Year</div><div class="a cb" style="left:519.3px;top:1375.0px"></div><div class="a t slate" style="left:542.6px;top:1376.90px;font-size:15px;">Обязательное поле</div><svg style="left:688.5px;top:1378.0px" width="13" height="13"><circle cx="6.5" cy="6.5" r="6.2" fill="#8e9bcb"/><path d="M4.4,5.1 Q4.4,2.9 6.6,2.9 Q8.7,2.9 8.7,4.8 Q8.7,5.9 7.4,6.6 Q6.6,7 6.6,8.1" fill="none" stroke="#fff" stroke-width="1.6"/><circle cx="6.6" cy="10.1" r="0.95" fill="#fff"/></svg><div class="a cb" style="left:519.3px;top:1401.2px"></div><div class="a t slate" style="left:542.6px;top:1403.10px;font-size:15px;">Вставить комментарий</div><svg style="left:714.6px;top:1404.5px" width="13" height="13"><circle cx="6.5" cy="6.5" r="6.2" fill="#8e9bcb"/><path d="M4.4,5.1 Q4.4,2.9 6.6,2.9 Q8.7,2.9 8.7,4.8 Q8.7,5.9 7.4,6.6 Q6.6,7 6.6,8.1" fill="none" stroke="#fff" stroke-width="1.6"/><circle cx="6.6" cy="10.1" r="0.95" fill="#fff"/></svg><div class="a cb" style="left:519.3px;top:1427.4px"></div><div class="a t slate" style="left:542.6px;top:1429.30px;font-size:15px;">Выполнить преобразование данных</div><svg style="left:801.7px;top:1431.0px" width="13" height="13"><circle cx="6.5" cy="6.5" r="6.2" fill="#8e9bcb"/><path d="M4.4,5.1 Q4.4,2.9 6.6,2.9 Q8.7,2.9 8.7,4.8 Q8.7,5.9 7.4,6.6 Q6.6,7 6.6,8.1" fill="none" stroke="#fff" stroke-width="1.6"/><circle cx="6.6" cy="10.1" r="0.95" fill="#fff"/></svg><div class="a dot" style="left:503px;top:1453.5px;width:616px"></div><div class="a badge" style="left:745px;top:229.7px">2</div><div class="a badge" style="left:885px;top:747px">3</div><div class="a right"><div class="a hdr" style="left:0px;width:438px"><b>FullName</b>string</div><div class="a hdr" style="left:439px;width:161px"><b>ShortName</b>string</div><div class="a hdr" style="left:601px;width:187px"><b>OlympiadType</b>string</div><div class="a hdr" style="left:789px;width:60px"><b>Stage</b>string</div><div class="a hdr" style="left:850px;width:69px"><b>Class</b>string</div><div class="a hdr" style="left:920px;width:151px"><b>Subject</b>string</div><div class="a hdr" style="left:1072px;width:99px"><b>Status</b>string</div><div class="a hdr" style="left:1172px;width:137px"><b>Year</b>string</div><div class="a hdr" style="left:1310px;width:101px"><b style="color:#2d5566">global_id</b>long</div><div class="a row" style="top:34px"><div class="c" style="left:0px;width:438px;background:#eef2f5">Государственное бюджетное общеобразовательное учреждение гор…</div><div class="c" style="left:439px;width:161px;background:#eef2f5">ГБОУ лицей «Вторая …</div><div class="c" style="left:601px;width:187px;background:#eef2f5">Всероссийская олимпиада</div><div class="c" style="left:789px;width:60px;background:#eef2f5">3</div><div class="c" style="left:850px;width:69px;background:#eef2f5">11</div><div class="c" style="left:920px;width:151px;background:#eef2f5">Иностранный язык (а…</div><div class="c" style="left:1072px;width:99px;background:#eef2f5">призёр</div><div class="c" style="left:1172px;width:137px;background:#eef2f5">2012/2013</div><div class="c" style="left:1310px;width:101px;background:#eef2f5;color:#1b8230">4472939</div></div><div class="a row" style="top:58px"><div class="c" style="left:0px;width:438px;background:#e7ecef">Государственное бюджетное общеобразовательное учреждение гор…</div><div class="c" style="left:439px;width:161px;background:#e7ecef">ГБОУ лицей «Вторая …</div><div class="c" style="left:601px;width:187px;background:#e7ecef">Всероссийская олимпиада</div><div class="c" style="left:789px;width:60px;background:#e7ecef">3</div><div class="c" style="left:850px;width:69px;background:#e7ecef">11</div><div class="c" style="left:920px;width:151px;background:#e7ecef">Иностранный язык (а…</div><div class="c" style="left:1072px;width:99px;background:#e7ecef">призёр</div><div class="c" style="left:1172px;width:137px;background:#e7ecef">2012/2013</div><div class="c" style="left:1310px;width:101px;background:#e7ecef;color:#1b8230">4472940</div></div><div class="a row" style="top:82px"><div class="c" style="left:0px;width:438px;background:#eef2f5">Государственное бюджетное общеобразовательное учреждение гор…</div><div class="c" style="left:439px;width:161px;background:#eef2f5">ГБОУ лицей «Вторая …</div><div class="c" style="left:601px;width:187px;background:#eef2f5">Всероссийская олимпиада</div><div class="c" style="left:789px;width:60px;background:#eef2f5">3</div><div class="c" style="left:850px;width:69px;background:#eef2f5">10</div><div class="c" style="left:920px;width:151px;background:#eef2f5">Иностранный язык (а…</div><div class="c" style="left:1072px;width:99px;background:#eef2f5">призёр</div><div class="c" style="left:1172px;width:137px;background:#eef2f5">2012/2013</div><div class="c" style="left:1310px;width:101px;background:#eef2f5;color:#1b8230">4472941</div></div><div class="a row" style="top:106px"><div class="c" style="left:0px;width:438px;background:#e7ecef">Государственное бюджетное образовательное учреждение города …</div><div class="c" style="left:439px;width:161px;background:#e7ecef">ГБОУ СОШ № 26</div><div class="c" style="left:601px;width:187px;background:#e7ecef">Всероссийская олимпиада</div><div class="c" style="left:789px;width:60px;background:#e7ecef">4</div><div class="c" style="left:850px;width:69px;background:#e7ecef">11</div><div class="c" style="left:920px;width:151px;background:#e7ecef">Иностранный язык (а…</div><div class="c" style="left:1072px;width:99px;background:#e7ecef">победитель</div><div class="c" style="left:1172px;width:137px;background:#e7ecef">2012/2013</div><div class="c" style="left:1310px;width:101px;background:#e7ecef;color:#1b8230">4472942</div></div><div class="a row" style="top:130px"><div class="c" style="left:0px;width:438px;background:#eef2f5">Государственное бюджетное образовательное учреждение города …</div><div class="c" style="left:439px;width:161px;background:#eef2f5">ГБОУ СОШ № 26</div><div class="c" style="left:601px;width:187px;background:#eef2f5">Всероссийская олимпиада</div><div class="c" style="left:789px;width:60px;background:#eef2f5">3</div><div class="c" style="left:850px;width:69px;background:#eef2f5">11</div><div class="c" style="left:920px;width:151px;background:#eef2f5">Иностранный язык (а…</div><div class="c" style="left:1072px;width:99px;background:#eef2f5">призёр</div><div class="c" style="left:1172px;width:137px;background:#eef2f5">2012/2013</div><div class="c" style="left:1310px;width:101px;background:#eef2f5;color:#1b8230">4472943</div></div><div class="a row" style="top:154px"><div class="c" style="left:0px;width:438px;background:#e7ecef">Государственное бюджетное образовательное учреждение города …</div><div class="c" style="left:439px;width:161px;background:#e7ecef">ГБОУ СОШ № 56</div><div class="c" style="left:601px;width:187px;background:#e7ecef">Всероссийская олимпиада</div><div class="c" style="left:789px;width:60px;background:#e7ecef">3</div><div class="c" style="left:850px;width:69px;background:#e7ecef">10</div><div class="c" style="left:920px;width:151px;background:#e7ecef">Иностранный язык (а…</div><div class="c" style="left:1072px;width:99px;background:#e7ecef">призёр</div><div class="c" style="left:1172px;width:137px;background:#e7ecef">2012/2013</div><div class="c" style="left:1310px;width:101px;background:#e7ecef;color:#1b8230">4472944</div></div><div class="a row" style="top:178px"><div class="c" style="left:0px;width:438px;background:#eef2f5">Государственное бюджетное образовательное учреждение города …</div><div class="c" style="left:439px;width:161px;background:#eef2f5">ГБОУ ЦО № 57</div><div class="c" style="left:601px;width:187px;background:#eef2f5">Всероссийская олимпиада</div><div class="c" style="left:789px;width:60px;background:#eef2f5">3</div><div class="c" style="left:850px;width:69px;background:#eef2f5">10</div><div class="c" style="left:920px;width:151px;background:#eef2f5">Иностранный язык (а…</div><div class="c" style="left:1072px;width:99px;background:#eef2f5">призёр</div><div class="c" style="left:1172px;width:137px;background:#eef2f5">2012/2013</div><div class="c" style="left:1310px;width:101px;background:#eef2f5;color:#1b8230">4472945</div></div><div class="a row" style="top:202px"><div class="c" style="left:0px;width:438px;background:#e7ecef">Государственное бюджетное образовательное учреждение города …</div><div class="c" style="left:439px;width:161px;background:#e7ecef">ГБОУ ЦО № 57</div><div class="c" style="left:601px;width:187px;background:#e7ecef">Всероссийская олимпиада</div><div class="c" style="left:789px;width:60px;background:#e7ecef">3</div><div class="c" style="left:850px;width:69px;background:#e7ecef">11</div><div class="c" style="left:920px;width:151px;background:#e7ecef">Иностранный язык (а…</div><div class="c" style="left:1072px;width:99px;background:#e7ecef">призёр</div><div class="c" style="left:1172px;width:137px;background:#e7ecef">2012/2013</div><div class="c" style="left:1310px;width:101px;background:#e7ecef;color:#1b8230">4472946</div></div><div class="a row" style="top:226px"><div class="c" style="left:0px;width:438px;background:#eef2f5">Государственное бюджетное общеобразовательное учреждение гор…</div><div class="c" style="left:439px;width:161px;background:#eef2f5">ГБОУ лицей № 138</div><div class="c" style="left:601px;width:187px;background:#eef2f5">Всероссийская олимпиада</div><div class="c" style="left:789px;width:60px;background:#eef2f5">3</div><div class="c" style="left:850px;width:69px;background:#eef2f5">11</div><div class="c" style="left:920px;width:151px;background:#eef2f5">Иностранный язык (а…</div><div class="c" style="left:1072px;width:99px;background:#eef2f5">призёр</div><div class="c" style="left:1172px;width:137px;background:#eef2f5">2012/2013</div><div class="c" style="left:1310px;width:101px;background:#eef2f5;color:#1b8230">4472947</div></div><div class="a row" style="top:250px"><div class="c" style="left:0px;width:438px;background:#e7ecef">Государственное бюджетное образовательное учреждение города …</div><div class="c" style="left:439px;width:161px;background:#e7ecef">ГБОУ ЦО № 218</div><div class="c" style="left:601px;width:187px;background:#e7ecef">Всероссийская олимпиада</div><div class="c" style="left:789px;width:60px;background:#e7ecef">3</div><div class="c" style="left:850px;width:69px;background:#e7ecef">11</div><div class="c" style="left:920px;width:151px;background:#e7ecef">Иностранный язык (а…</div><div class="c" style="left:1072px;width:99px;background:#e7ecef">призёр</div><div class="c" style="left:1172px;width:137px;background:#e7ecef">2012/2013</div><div class="c" style="left:1310px;width:101px;background:#e7ecef;color:#1b8230">4472948</div></div><div class="a row" style="top:274px"><div class="c" style="left:0px;width:438px;background:#eef2f5">Государственное бюджетное общеобразовательное учреждение гор…</div><div class="c" style="left:439px;width:161px;background:#eef2f5">ГБОУ школа № 399</div><div class="c" style="left:601px;width:187px;background:#eef2f5">Всероссийская олимпиада</div><div class="c" style="left:789px;width:60px;background:#eef2f5">4</div><div class="c" style="left:850px;width:69px;background:#eef2f5">11</div><div class="c" style="left:920px;width:151px;background:#eef2f5">Иностранный язык (а…</div><div class="c" style="left:1072px;width:99px;background:#eef2f5">призёр</div><div class="c" style="left:1172px;width:137px;background:#eef2f5">2012/2013</div><div class="c" style="left:1310px;width:101px;background:#eef2f5;color:#1b8230">4472949</div></div><div class="a row" style="top:298px"><div class="c" style="left:0px;width:438px;background:#e7ecef">Государственное бюджетное общеобразовательное учреждение гор…</div><div class="c" style="left:439px;width:161px;background:#e7ecef">ГБОУ школа № 399</div><div class="c" style="left:601px;width:187px;background:#e7ecef">Всероссийская олимпиада</div><div class="c" style="left:789px;width:60px;background:#e7ecef">3</div><div class="c" style="left:850px;width:69px;background:#e7ecef">11</div><div class="c" style="left:920px;width:151px;background:#e7ecef">Иностранный язык (а…</div><div class="c" style="left:1072px;width:99px;background:#e7ecef">призёр</div><div class="c" style="left:1172px;width:137px;background:#e7ecef">2012/2013</div><div class="c" style="left:1310px;width:101px;background:#e7ecef;color:#1b8230">4472950</div></div><div class="a row" style="top:322px"><div class="c" style="left:0px;width:438px;background:#eef2f5">Государственное бюджетное образовательное учреждение города …</div><div class="c" style="left:439px;width:161px;background:#eef2f5">ГБОУ СОШ № 444</div><div class="c" style="left:601px;width:187px;background:#eef2f5">Всероссийская олимпиада</div><div class="c" style="left:789px;width:60px;background:#eef2f5">4</div><div class="c" style="left:850px;width:69px;background:#eef2f5">10</div><div class="c" style="left:920px;width:151px;background:#eef2f5">Иностранный язык (а…</div><div class="c" style="left:1072px;width:99px;background:#eef2f5">призёр</div><div class="c" style="left:1172px;width:137px;background:#eef2f5">2012/2013</div><div class="c" style="left:1310px;width:101px;background:#eef2f5;color:#1b8230">4472951</div></div><div class="a row" style="top:346px"><div class="c" style="left:0px;width:438px;background:#e7ecef">Государственное бюджетное образовательное учреждение города …</div><div class="c" style="left:439px;width:161px;background:#e7ecef">ГБОУ СОШ № 444</div><div class="c" style="left:601px;width:187px;background:#e7ecef">Всероссийская олимпиада</div><div class="c" style="left:789px;width:60px;background:#e7ecef">3</div><div class="c" style="left:850px;width:69px;background:#e7ecef">10</div><div class="c" style="left:920px;width:151px;background:#e7ecef">Иностранный язык (а…</div><div class="c" style="left:1072px;width:99px;background:#e7ecef">призёр</div><div class="c" style="left:1172px;width:137px;background:#e7ecef">2012/2013</div><div class="c" style="left:1310px;width:101px;background:#e7ecef;color:#1b8230">4472952</div></div><div class="a row" style="top:370px"><div class="c" style="left:0px;width:438px;background:#eef2f5">Государственное бюджетное образовательное учреждение города …</div><div class="c" style="left:439px;width:161px;background:#eef2f5">ГБОУ ЦО № 491 «Мар…</div><div class="c" style="left:601px;width:187px;background:#eef2f5">Всероссийская олимпиада</div><div class="c" style="left:789px;width:60px;background:#eef2f5">3</div><div class="c" style="left:850px;width:69px;background:#eef2f5">10</div><div class="c" style="left:920px;width:151px;background:#eef2f5">Иностранный язык (а…</div><div class="c" style="left:1072px;width:99px;background:#eef2f5">призёр</div><div class="c" style="left:1172px;width:137px;background:#eef2f5">2012/2013</div><div class="c" style="left:1310px;width:101px;background:#eef2f5;color:#1b8230">4472953</div></div><div class="a row" style="top:394px"><div class="c" style="left:0px;width:438px;background:#e7ecef">Государственное бюджетное образовательное учреждение города …</div><div class="c" style="left:439px;width:161px;background:#e7ecef">ГБОУ ЦО № 497</div><div class="c" style="left:601px;width:187px;background:#e7ecef">Всероссийская олимпиада</div><div class="c" style="left:789px;width:60px;background:#e7ecef">3</div><div class="c" style="left:850px;width:69px;background:#e7ecef">11</div><div class="c" style="left:920px;width:151px;background:#e7ecef">Иностранный язык (а…</div><div class="c" style="left:1072px;width:99px;background:#e7ecef">призёр</div><div class="c" style="left:1172px;width:137px;background:#e7ecef">2012/2013</div><div class="c" style="left:1310px;width:101px;background:#e7ecef;color:#1b8230">4472954</div></div><div class="a row" style="top:418px"><div class="c" style="left:0px;width:438px;background:#eef2f5">Государственное бюджетное образовательное учреждение города …</div><div class="c" style="left:439px;width:161px;background:#eef2f5">ГБОУ СОШ № 654 име…</div><div class="c" style="left:601px;width:187px;background:#eef2f5">Всероссийская олимпиада</div><div class="c" style="left:789px;width:60px;background:#eef2f5">3</div><div class="c" style="left:850px;width:69px;background:#eef2f5">9</div><div class="c" style="left:920px;width:151px;background:#eef2f5">Иностранный язык (а…</div><div class="c" style="left:1072px;width:99px;background:#eef2f5">призёр</div><div class="c" style="left:1172px;width:137px;background:#eef2f5">2012/2013</div><div class="c" style="left:1310px;width:101px;background:#eef2f5;color:#1b8230">4472955</div></div><div class="a row" style="top:442px"><div class="c" style="left:0px;width:438px;background:#e7ecef">Государственное бюджетное общеобразовательное учреждение гор…</div><div class="c" style="left:439px;width:161px;background:#e7ecef">ГБОУ школа № 853</div><div class="c" style="left:601px;width:187px;background:#e7ecef">Всероссийская олимпиада</div><div class="c" style="left:789px;width:60px;background:#e7ecef">3</div><div class="c" style="left:850px;width:69px;background:#e7ecef">11</div><div class="c" style="left:920px;width:151px;background:#e7ecef">Иностранный язык (а…</div><div class="c" style="left:1072px;width:99px;background:#e7ecef">призёр</div><div class="c" style="left:1172px;width:137px;background:#e7ecef">2012/2013</div><div class="c" style="left:1310px;width:101px;background:#e7ecef;color:#1b8230">4472956</div></div><div class="a row" style="top:466px"><div class="c" style="left:0px;width:438px;background:#eef2f5">Государственное бюджетное образовательное учреждение города …</div><div class="c" style="left:439px;width:161px;background:#eef2f5">ГБОУ СОШ № 1038</div><div class="c" style="left:601px;width:187px;background:#eef2f5">Всероссийская олимпиада</div><div class="c" style="left:789px;width:60px;background:#eef2f5">3</div><div class="c" style="left:850px;width:69px;background:#eef2f5">11</div><div class="c" style="left:920px;width:151px;background:#eef2f5">Иностранный язык (а…</div><div class="c" style="left:1072px;width:99px;background:#eef2f5">призёр</div><div class="c" style="left:1172px;width:137px;background:#eef2f5">2012/2013</div><div class="c" style="left:1310px;width:101px;background:#eef2f5;color:#1b8230">4472957</div></div><div class="a row" style="top:490px"><div class="c" style="left:0px;width:438px;background:#e7ecef">Государственное бюджетное образовательное учреждение города …</div><div class="c" style="left:439px;width:161px;background:#e7ecef">ГБОУ СОШ № 1084</div><div class="c" style="left:601px;width:187px;background:#e7ecef">Всероссийская олимпиада</div><div class="c" style="left:789px;width:60px;background:#e7ecef">3</div><div class="c" style="left:850px;width:69px;background:#e7ecef">11</div><div class="c" style="left:920px;width:151px;background:#e7ecef">Иностранный язык (а…</div><div class="c" style="left:1072px;width:99px;background:#e7ecef">призёр</div><div class="c" style="left:1172px;width:137px;background:#e7ecef">2012/2013</div><div class="c" style="left:1310px;width:101px;background:#e7ecef;color:#1b8230">4472958</div></div><div class="a row" style="top:514px"><div class="c" style="left:0px;width:438px;background:#eef2f5">Государственное бюджетное образовательное учреждение города …</div><div class="c" style="left:439px;width:161px;background:#eef2f5">ГБОУ лицей № 1158</div><div class="c" style="left:601px;width:187px;background:#eef2f5">Всероссийская олимпиада</div><div class="c" style="left:789px;width:60px;background:#eef2f5">4</div><div class="c" style="left:850px;width:69px;background:#eef2f5">11</div><div class="c" style="left:920px;width:151px;background:#eef2f5">Иностранный язык (а…</div><div class="c" style="left:1072px;width:99px;background:#eef2f5">победитель</div><div class="c" style="left:1172px;width:137px;background:#eef2f5">2012/2013</div><div class="c" style="left:1310px;width:101px;background:#eef2f5;color:#1b8230">4472959</div></div><div class="a row" style="top:538px"><div class="c" style="left:0px;width:438px;background:#e7ecef">Государственное бюджетное образовательное учреждение города …</div><div class="c" style="left:439px;width:161px;background:#e7ecef">ГБОУ СОШ № 1205</div><div class="c" style="left:601px;width:187px;background:#e7ecef">Всероссийская олимпиада</div><div class="c" style="left:789px;width:60px;background:#e7ecef">3</div><div class="c" style="left:850px;width:69px;background:#e7ecef">9</div><div class="c" style="left:920px;width:151px;background:#e7ecef">Иностранный язык (а…</div><div class="c" style="left:1072px;width:99px;background:#e7ecef">призёр</div><div class="c" style="left:1172px;width:137px;background:#e7ecef">2012/2013</div><div class="c" style="left:1310px;width:101px;background:#e7ecef;color:#1b8230">4472960</div></div><div class="a row" style="top:562px"><div class="c" style="left:0px;width:438px;background:#eef2f5">Государственное бюджетное образовательное учреждение города …</div><div class="c" style="left:439px;width:161px;background:#eef2f5">ГБОУ СОШ № 1955</div><div class="c" style="left:601px;width:187px;background:#eef2f5">Московская олимпиада</div><div class="c" style="left:789px;width:60px;background:#eef2f5"></div><div class="c" style="left:850px;width:69px;background:#eef2f5">7</div><div class="c" style="left:920px;width:151px;background:#eef2f5">Изобразительное иск…</div><div class="c" style="left:1072px;width:99px;background:#eef2f5">призёр</div><div class="c" style="left:1172px;width:137px;background:#eef2f5">2014/2015</div><div class="c" style="left:1310px;width:101px;background:#eef2f5;color:#1b8230">4472961</div></div><div class="a row" style="top:586px"><div class="c" style="left:0px;width:438px;background:#e7ecef">Государственное бюджетное образовательное учреждение города …</div><div class="c" style="left:439px;width:161px;background:#e7ecef">ГБОУ СОШ № 1206</div><div class="c" style="left:601px;width:187px;background:#e7ecef">Всероссийская олимпиада</div><div class="c" style="left:789px;width:60px;background:#e7ecef">3</div><div class="c" style="left:850px;width:69px;background:#e7ecef">11</div><div class="c" style="left:920px;width:151px;background:#e7ecef">Иностранный язык (а…</div><div class="c" style="left:1072px;width:99px;background:#e7ecef">призёр</div><div class="c" style="left:1172px;width:137px;background:#e7ecef">2012/2013</div><div class="c" style="left:1310px;width:101px;background:#e7ecef;color:#1b8230">4472962</div></div><div class="a row" style="top:610px"><div class="c" style="left:0px;width:438px;background:#eef2f5">Государственное бюджетное образовательное учреждение города …</div><div class="c" style="left:439px;width:161px;background:#eef2f5">ГБОУ СОШ № 1207</div><div class="c" style="left:601px;width:187px;background:#eef2f5">Всероссийская олимпиада</div><div class="c" style="left:789px;width:60px;background:#eef2f5">3</div><div class="c" style="left:850px;width:69px;background:#eef2f5">11</div><div class="c" style="left:920px;width:151px;background:#eef2f5">Иностранный язык (а…</div><div class="c" style="left:1072px;width:99px;background:#eef2f5">призёр</div><div class="c" style="left:1172px;width:137px;background:#eef2f5">2012/2013</div><div class="c" style="left:1310px;width:101px;background:#eef2f5;color:#1b8230">4472963</div></div><div class="a row" style="top:634px"><div class="c" style="left:0px;width:438px;background:#e7ecef">Государственное бюджетное образовательное учреждение города …</div><div class="c" style="left:439px;width:161px;background:#e7ecef">ГБОУ СОШ № 1208</div><div class="c" style="left:601px;width:187px;background:#e7ecef">Всероссийская олимпиада</div><div class="c" style="left:789px;width:60px;background:#e7ecef">3</div><div class="c" style="left:850px;width:69px;background:#e7ecef">11</div><div class="c" style="left:920px;width:151px;background:#e7ecef">Иностранный язык (а…</div><div class="c" style="left:1072px;width:99px;background:#e7ecef">призёр</div><div class="c" style="left:1172px;width:137px;background:#e7ecef">2012/2013</div><div class="c" style="left:1310px;width:101px;background:#e7ecef;color:#1b8230">4472964</div></div><div class="a row" style="top:658px"><div class="c" style="left:0px;width:438px;background:#eef2f5">Государственное бюджетное образовательное учреждение города …</div><div class="c" style="left:439px;width:161px;background:#eef2f5">ГБОУ СОШ № 1208</div><div class="c" style="left:601px;width:187px;background:#eef2f5">Всероссийская олимпиада</div><div class="c" style="left:789px;width:60px;background:#eef2f5">3</div><div class="c" style="left:850px;width:69px;background:#eef2f5">10</div><div class="c" style="left:920px;width:151px;background:#eef2f5">Иностранный язык (а…</div><div class="c" style="left:1072px;width:99px;background:#eef2f5">призёр</div><div class="c" style="left:1172px;width:137px;background:#eef2f5">2012/2013</div><div class="c" style="left:1310px;width:101px;background:#eef2f5;color:#1b8230">4472965</div></div><div class="a row" style="top:682px"><div class="c" style="left:0px;width:438px;background:#e7ecef">Государственное бюджетное образовательное учреждение города …</div><div class="c" style="left:439px;width:161px;background:#e7ecef">ГБОУ СОШ № 1208</div><div class="c" style="left:601px;width:187px;background:#e7ecef">Всероссийская олимпиада</div><div class="c" style="left:789px;width:60px;background:#e7ecef">3</div><div class="c" style="left:850px;width:69px;background:#e7ecef">11</div><div class="c" style="left:920px;width:151px;background:#e7ecef">Иностранный язык (а…</div><div class="c" style="left:1072px;width:99px;background:#e7ecef">призёр</div><div class="c" style="left:1172px;width:137px;background:#e7ecef">2012/2013</div><div class="c" style="left:1310px;width:101px;background:#e7ecef;color:#1b8230">4472966</div></div><div class="a row" style="top:706px"><div class="c" style="left:0px;width:438px;background:#eef2f5">Государственное бюджетное образовательное учреждение города …</div><div class="c" style="left:439px;width:161px;background:#eef2f5">ГБОУ СОШ № 1208</div><div class="c" style="left:601px;width:187px;background:#eef2f5">Всероссийская олимпиада</div><div class="c" style="left:789px;width:60px;background:#eef2f5">3</div><div class="c" style="left:850px;width:69px;background:#eef2f5">11</div><div class="c" style="left:920px;width:151px;background:#eef2f5">Иностранный язык (а…</div><div class="c" style="left:1072px;width:99px;background:#eef2f5">призёр</div><div class="c" style="left:1172px;width:137px;background:#eef2f5">2012/2013</div><div class="c" style="left:1310px;width:101px;background:#eef2f5;color:#1b8230">4472967</div></div><div class="a row" style="top:730px"><div class="c" style="left:0px;width:438px;background:#e7ecef">Государственное бюджетное образовательное учреждение города …</div><div class="c" style="left:439px;width:161px;background:#e7ecef">ГБОУ СОШ № 1210</div><div class="c" style="left:601px;width:187px;background:#e7ecef">Всероссийская олимпиада</div><div class="c" style="left:789px;width:60px;background:#e7ecef">3</div><div class="c" style="left:850px;width:69px;background:#e7ecef">11</div><div class="c" style="left:920px;width:151px;background:#e7ecef">Иностранный язык (а…</div><div class="c" style="left:1072px;width:99px;background:#e7ecef">призёр</div><div class="c" style="left:1172px;width:137px;background:#e7ecef">2012/2013</div><div class="c" style="left:1310px;width:101px;background:#e7ecef;color:#1b8230">4472968</div></div><div class="a row" style="top:754px"><div class="c" style="left:0px;width:438px;background:#eef2f5">Государственное бюджетное образовательное учреждение города …</div><div class="c" style="left:439px;width:161px;background:#eef2f5">ГБОУ СОШ № 1223</div><div class="c" style="left:601px;width:187px;background:#eef2f5">Всероссийская олимпиада</div><div class="c" style="left:789px;width:60px;background:#eef2f5">3</div><div class="c" style="left:850px;width:69px;background:#eef2f5">11</div><div class="c" style="left:920px;width:151px;background:#eef2f5">Иностранный язык (а…</div><div class="c" style="left:1072px;width:99px;background:#eef2f5">призёр</div><div class="c" style="left:1172px;width:137px;background:#eef2f5">2012/2013</div><div class="c" style="left:1310px;width:101px;background:#eef2f5;color:#1b8230">4472969</div></div><div class="a row" style="top:778px"><div class="c" style="left:0px;width:438px;background:#e7ecef">Государственное бюджетное образовательное учреждение города …</div><div class="c" style="left:439px;width:161px;background:#e7ecef">ГБОУ СОШ № 1223</div><div class="c" style="left:601px;width:187px;background:#e7ecef">Всероссийская олимпиада</div><div class="c" style="left:789px;width:60px;background:#e7ecef">4</div><div class="c" style="left:850px;width:69px;background:#e7ecef">11</div><div class="c" style="left:920px;width:151px;background:#e7ecef">Иностранный язык (а…</div><div class="c" style="left:1072px;width:99px;background:#e7ecef">призёр</div><div class="c" style="left:1172px;width:137px;background:#e7ecef">2012/2013</div><div class="c" style="left:1310px;width:101px;background:#e7ecef;color:#1b8230">4472970</div></div><div class="a row" style="top:802px"><div class="c" style="left:0px;width:438px;background:#eef2f5">Государственное бюджетное образовательное учреждение города …</div><div class="c" style="left:439px;width:161px;background:#eef2f5">ГБОУ СОШ № 1223</div><div class="c" style="left:601px;width:187px;background:#eef2f5">Всероссийская олимпиада</div><div class="c" style="left:789px;width:60px;background:#eef2f5">3</div><div class="c" style="left:850px;width:69px;background:#eef2f5">10</div><div class="c" style="left:920px;width:151px;background:#eef2f5">Иностранный язык (а…</div><div class="c" style="left:1072px;width:99px;background:#eef2f5">призёр</div><div class="c" style="left:1172px;width:137px;background:#eef2f5">2012/2013</div><div class="c" style="left:1310px;width:101px;background:#eef2f5;color:#1b8230">4472971</div></div><div class="a row" style="top:826px"><div class="c" style="left:0px;width:438px;background:#e7ecef">Государственное бюджетное образовательное учреждение города …</div><div class="c" style="left:439px;width:161px;background:#e7ecef">ГБОУ СОШ № 1223</div><div class="c" style="left:601px;width:187px;background:#e7ecef">Всероссийская олимпиада</div><div class="c" style="left:789px;width:60px;background:#e7ecef">3</div><div class="c" style="left:850px;width:69px;background:#e7ecef">10</div><div class="c" style="left:920px;width:151px;background:#e7ecef">Иностранный язык (а…</div><div class="c" style="left:1072px;width:99px;background:#e7ecef">призёр</div><div class="c" style="left:1172px;width:137px;background:#e7ecef">2012/2013</div><div class="c" style="left:1310px;width:101px;background:#e7ecef;color:#1b8230">4472972</div></div><div class="a row" style="top:850px"><div class="c" style="left:0px;width:438px;background:#eef2f5">Государственное бюджетное образовательное учреждение города …</div><div class="c" style="left:439px;width:161px;background:#eef2f5">ГБОУ СОШ № 1227</div><div class="c" style="left:601px;width:187px;background:#eef2f5">Всероссийская олимпиада</div><div class="c" style="left:789px;width:60px;background:#eef2f5">4</div><div class="c" style="left:850px;width:69px;background:#eef2f5">11</div><div class="c" style="left:920px;width:151px;background:#eef2f5">Иностранный язык (а…</div><div class="c" style="left:1072px;width:99px;background:#eef2f5">победитель</div><div class="c" style="left:1172px;width:137px;background:#eef2f5">2012/2013</div><div class="c" style="left:1310px;width:101px;background:#eef2f5;color:#1b8230">4472973</div></div><div class="a row" style="top:874px"><div class="c" style="left:0px;width:438px;background:#e7ecef">Государственное бюджетное образовательное учреждение города …</div><div class="c" style="left:439px;width:161px;background:#e7ecef">ГБОУ СОШ № 1227</div><div class="c" style="left:601px;width:187px;background:#e7ecef">Всероссийская олимпиада</div><div class="c" style="left:789px;width:60px;background:#e7ecef">3</div><div class="c" style="left:850px;width:69px;background:#e7ecef">11</div><div class="c" style="left:920px;width:151px;background:#e7ecef">Иностранный язык (а…</div><div class="c" style="left:1072px;width:99px;background:#e7ecef">призёр</div><div class="c" style="left:1172px;width:137px;background:#e7ecef">2012/2013</div><div class="c" style="left:1310px;width:101px;background:#e7ecef;color:#1b8230">4472974</div></div><div class="a row" style="top:898px"><div class="c" style="left:0px;width:438px;background:#eef2f5">Государственное бюджетное образовательное учреждение города …</div><div class="c" style="left:439px;width:161px;background:#eef2f5">ГБОУ СОШ № 1234</div><div class="c" style="left:601px;width:187px;background:#eef2f5">Всероссийская олимпиада</div><div class="c" style="left:789px;width:60px;background:#eef2f5">3</div><div class="c" style="left:850px;width:69px;background:#eef2f5">11</div><div class="c" style="left:920px;width:151px;background:#eef2f5">Иностранный язык (а…</div><div class="c" style="left:1072px;width:99px;background:#eef2f5">призёр</div><div class="c" style="left:1172px;width:137px;background:#eef2f5">2012/2013</div><div class="c" style="left:1310px;width:101px;background:#eef2f5;color:#1b8230">4472975</div></div><div class="a row" style="top:922px"><div class="c" style="left:0px;width:438px;background:#e7ecef">Государственное бюджетное образовательное учреждение города …</div><div class="c" style="left:439px;width:161px;background:#e7ecef">ГБОУ СОШ № 1246</div><div class="c" style="left:601px;width:187px;background:#e7ecef">Всероссийская олимпиада</div><div class="c" style="left:789px;width:60px;background:#e7ecef">4</div><div class="c" style="left:850px;width:69px;background:#e7ecef">11</div><div class="c" style="left:920px;width:151px;background:#e7ecef">Иностранный язык (а…</div><div class="c" style="left:1072px;width:99px;background:#e7ecef">призёр</div><div class="c" style="left:1172px;width:137px;background:#e7ecef">2012/2013</div><div class="c" style="left:1310px;width:101px;background:#e7ecef;color:#1b8230">4472976</div></div><div class="a row" style="top:946px"><div class="c" style="left:0px;width:438px;background:#eef2f5">Государственное бюджетное образовательное учреждение города …</div><div class="c" style="left:439px;width:161px;background:#eef2f5">ГБОУ СОШ № 1246</div><div class="c" style="left:601px;width:187px;background:#eef2f5">Всероссийская олимпиада</div><div class="c" style="left:789px;width:60px;background:#eef2f5">3</div><div class="c" style="left:850px;width:69px;background:#eef2f5">11</div><div class="c" style="left:920px;width:151px;background:#eef2f5">Иностранный язык (а…</div><div class="c" style="left:1072px;width:99px;background:#eef2f5">призёр</div><div class="c" style="left:1172px;width:137px;background:#eef2f5">2012/2013</div><div class="c" style="left:1310px;width:101px;background:#eef2f5;color:#1b8230">4472977</div></div><div class="a row" style="top:970px"><div class="c" style="left:0px;width:438px;background:#e7ecef">Государственное бюджетное образовательное учреждение города …</div><div class="c" style="left:439px;width:161px;background:#e7ecef">ГБОУ СОШ № 1250</div><div class="c" style="left:601px;width:187px;background:#e7ecef">Всероссийская олимпиада</div><div class="c" style="left:789px;width:60px;background:#e7ecef">3</div><div class="c" style="left:850px;width:69px;background:#e7ecef">11</div><div class="c" style="left:920px;width:151px;background:#e7ecef">Иностранный язык (а…</div><div class="c" style="left:1072px;width:99px;background:#e7ecef">призёр</div><div class="c" style="left:1172px;width:137px;background:#e7ecef">2012/2013</div><div class="c" style="left:1310px;width:101px;background:#e7ecef;color:#1b8230">4472978</div></div><div class="a row" style="top:994px"><div class="c" style="left:0px;width:438px;background:#eef2f5">Государственное бюджетное образовательное учреждение города …</div><div class="c" style="left:439px;width:161px;background:#eef2f5">ГБОУ СОШ № 1250</div><div class="c" style="left:601px;width:187px;background:#eef2f5">Всероссийская олимпиада</div><div class="c" style="left:789px;width:60px;background:#eef2f5">4</div><div class="c" style="left:850px;width:69px;background:#eef2f5">11</div><div class="c" style="left:920px;width:151px;background:#eef2f5">Иностранный язык (а…</div><div class="c" style="left:1072px;width:99px;background:#eef2f5">призёр</div><div class="c" style="left:1172px;width:137px;background:#eef2f5">2012/2013</div><div class="c" style="left:1310px;width:101px;background:#eef2f5;color:#1b8230">4472979</div></div></div><div class="a vsb" style="left:2545px;top:106px;height:974px"></div><div class="a thumb" style="left:2545px;top:896px;width:10px;height:184px"></div><div class="a" style="left:1163px;top:1080px;width:1392px;height:10px;background:#fff"></div><div class="a" style="left:1165px;top:1080px;width:1380px;height:10px;border:1px solid #8a8a8a;border-radius:4px;background:linear-gradient(#e6e6e6,#fff 40%,#f6f6f6)"></div><div class="a" style="left:2517px;top:1080px;width:28px;height:10px;background:#8e8e8e;border-radius:0 4px 4px 0"></div><div class="a logbar"></div><div class="a" style="left:1168.4px;top:1091.6px;width:72.5px;height:23.2px;background:#e3e3e3;border-radius:3px 3px 0 0"></div><div class="a t " style="left:1177.4px;top:1096.50px;font-size:13px;color:#555">Источник</div><div class="a" style="left:1242px;top:1091.6px;width:241px;height:23.2px;background:#fff;border-radius:3px 3px 0 0"></div><div class="a t " style="left:1249.6px;top:1096.50px;font-size:13px;color:#444">Таблица: data-27257-2022-07-18_json</div><div class="a log"><div class="ln" style="top:1px"><i>20:04:49</i> Анализ структуры: data-27257-2022-07-18.json</div><div class="ln" style="top:17px"><i>20:04:49</i> Обработано 0% (131072 из 27740191)</div><div class="ln" style="top:33px;color:#1a8a2a"><i>20:04:49</i> Анализ успешно завершен: data-27257-2022-07-18.json</div></div><div class="a" style="left:0;top:1380px;width:2559px;height:4px;background:#a4afba"></div><div class="a badge" style="left:1973.2px;top:409.5px"></div><svg style="left:1973.2px;top:409.5px" width="40" height="40"><path d="M20.6,10.4 H23.6 V29.7 H19.9 V15.9 Q18.2,17.5 15.6,18.1 V15.2 Q19,14 20.6,10.4 Z" fill="#fff"/></svg><svg style="left:1441px;top:25px" width="12" height="17"><path d="M1.5,1.5 V13.2 L4.3,10.6 L6.4,15.2 L8.3,14.3 L6.3,9.8 H10 Z" fill="#000" stroke="#fff" stroke-width="1" stroke-linejoin="round"/></svg></body></html>
